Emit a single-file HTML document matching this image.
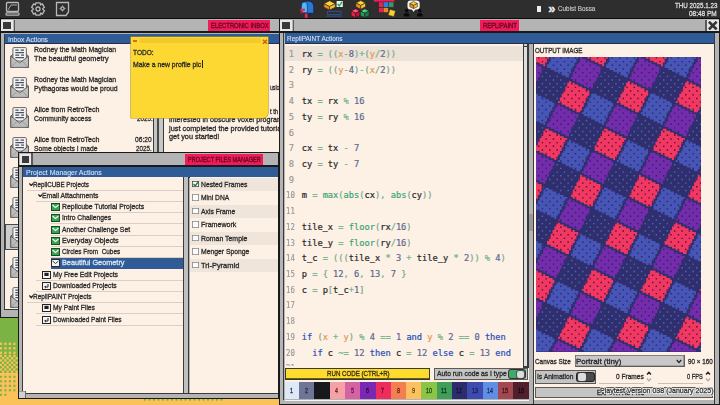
<!DOCTYPE html>
<html><head><meta charset="utf-8"><title>Desktop</title>
<style>
html,body{margin:0;padding:0;background:#2b2b2b;}
#s{position:relative;width:720px;height:405px;overflow:hidden;font-family:"Liberation Sans",sans-serif;}
#s div,#s span,#s svg{position:absolute;display:block;}
#s .t{white-space:pre;line-height:1.2;font-weight:400;-webkit-text-stroke:0.32px currentColor;transform-origin:0 50%;}
#s .m{-webkit-text-stroke:0.22px currentColor;white-space:pre;font-family:"DejaVu Sans Mono","Liberation Mono",monospace;font-size:8.7px;line-height:15.74px;color:#2a2a2a;transform-origin:0 50%;}
#s .m i{font-style:normal;position:static;display:inline;}
</style></head><body><div id="s">
<div style="left:0px;top:0px;width:720px;height:405px;background:#fcc25a;"></div>
<div style="left:0px;top:300px;width:30px;height:72.7px;background:#7bb344;"></div>
<svg style="left:0;top:336px" width="18.3" height="66" viewBox="0 0 18.3 66"><rect x="-0.25" y="6.65" width="2.3" height="2.3" fill="#fcc25a"/><rect x="4.25" y="6.65" width="2.3" height="2.3" fill="#fcc25a"/><rect x="8.75" y="6.65" width="2.3" height="2.3" fill="#fcc25a"/><rect x="13.25" y="6.65" width="2.3" height="2.3" fill="#fcc25a"/><rect x="-0.25" y="11.15" width="2.3" height="2.3" fill="#fcc25a"/><rect x="4.25" y="11.15" width="2.3" height="2.3" fill="#fcc25a"/><rect x="8.75" y="11.15" width="2.3" height="2.3" fill="#fcc25a"/><rect x="13.25" y="11.15" width="2.3" height="2.3" fill="#fcc25a"/><rect x="-0.25" y="15.65" width="2.3" height="2.3" fill="#fcc25a"/><rect x="4.25" y="15.65" width="2.3" height="2.3" fill="#fcc25a"/><rect x="8.75" y="15.65" width="2.3" height="2.3" fill="#fcc25a"/><rect x="13.25" y="15.65" width="2.3" height="2.3" fill="#fcc25a"/><rect x="-0.25" y="18.80" width="2.25" height="2.3" fill="#fcc25a"/><rect x="4.25" y="18.80" width="2.25" height="2.3" fill="#fcc25a"/><rect x="8.75" y="18.80" width="2.25" height="2.3" fill="#fcc25a"/><rect x="13.25" y="18.80" width="2.25" height="2.3" fill="#fcc25a"/><rect x="-2.50" y="21.05" width="2.25" height="2.3" fill="#fcc25a"/><rect x="2.00" y="21.05" width="2.25" height="2.3" fill="#fcc25a"/><rect x="6.50" y="21.05" width="2.25" height="2.3" fill="#fcc25a"/><rect x="11.00" y="21.05" width="2.25" height="2.3" fill="#fcc25a"/><rect x="15.50" y="21.05" width="2.25" height="2.3" fill="#fcc25a"/><rect x="-0.25" y="23.30" width="2.25" height="2.3" fill="#fcc25a"/><rect x="4.25" y="23.30" width="2.25" height="2.3" fill="#fcc25a"/><rect x="8.75" y="23.30" width="2.25" height="2.3" fill="#fcc25a"/><rect x="13.25" y="23.30" width="2.25" height="2.3" fill="#fcc25a"/><rect x="-2.50" y="25.55" width="2.25" height="2.3" fill="#fcc25a"/><rect x="2.00" y="25.55" width="2.25" height="2.3" fill="#fcc25a"/><rect x="6.50" y="25.55" width="2.25" height="2.3" fill="#fcc25a"/><rect x="11.00" y="25.55" width="2.25" height="2.3" fill="#fcc25a"/><rect x="15.50" y="25.55" width="2.25" height="2.3" fill="#fcc25a"/><rect x="-0.25" y="27.80" width="2.25" height="2.3" fill="#fcc25a"/><rect x="4.25" y="27.80" width="2.25" height="2.3" fill="#fcc25a"/><rect x="8.75" y="27.80" width="2.25" height="2.3" fill="#fcc25a"/><rect x="13.25" y="27.80" width="2.25" height="2.3" fill="#fcc25a"/><rect x="-2.50" y="30.05" width="2.25" height="2.3" fill="#fcc25a"/><rect x="2.00" y="30.05" width="2.25" height="2.3" fill="#fcc25a"/><rect x="6.50" y="30.05" width="2.25" height="2.3" fill="#fcc25a"/><rect x="11.00" y="30.05" width="2.25" height="2.3" fill="#fcc25a"/><rect x="15.50" y="30.05" width="2.25" height="2.3" fill="#fcc25a"/><rect x="-0.25" y="32.30" width="2.25" height="2.3" fill="#fcc25a"/><rect x="4.25" y="32.30" width="2.25" height="2.3" fill="#fcc25a"/><rect x="8.75" y="32.30" width="2.25" height="2.3" fill="#fcc25a"/><rect x="13.25" y="32.30" width="2.25" height="2.3" fill="#fcc25a"/><rect x="-2.50" y="34.55" width="2.25" height="2.3" fill="#fcc25a"/><rect x="2.00" y="34.55" width="2.25" height="2.3" fill="#fcc25a"/><rect x="6.50" y="34.55" width="2.25" height="2.3" fill="#fcc25a"/><rect x="11.00" y="34.55" width="2.25" height="2.3" fill="#fcc25a"/><rect x="15.50" y="34.55" width="2.25" height="2.3" fill="#fcc25a"/><rect x="-0.15" y="39.75" width="2.1" height="2.1" fill="#7bb344"/><rect x="4.35" y="39.75" width="2.1" height="2.1" fill="#7bb344"/><rect x="8.85" y="39.75" width="2.1" height="2.1" fill="#7bb344"/><rect x="13.35" y="39.75" width="2.1" height="2.1" fill="#7bb344"/><rect x="-0.15" y="44.25" width="2.1" height="2.1" fill="#7bb344"/><rect x="4.35" y="44.25" width="2.1" height="2.1" fill="#7bb344"/><rect x="8.85" y="44.25" width="2.1" height="2.1" fill="#7bb344"/><rect x="13.35" y="44.25" width="2.1" height="2.1" fill="#7bb344"/><rect x="-0.15" y="48.75" width="2.1" height="2.1" fill="#7bb344"/><rect x="4.35" y="48.75" width="2.1" height="2.1" fill="#7bb344"/><rect x="8.85" y="48.75" width="2.1" height="2.1" fill="#7bb344"/><rect x="13.35" y="48.75" width="2.1" height="2.1" fill="#7bb344"/><rect x="-0.15" y="53.25" width="2.1" height="2.1" fill="#7bb344"/><rect x="4.35" y="53.25" width="2.1" height="2.1" fill="#7bb344"/><rect x="8.85" y="53.25" width="2.1" height="2.1" fill="#7bb344"/><rect x="13.35" y="53.25" width="2.1" height="2.1" fill="#7bb344"/><rect x="-0.15" y="57.75" width="2.1" height="2.1" fill="#7bb344"/><rect x="4.35" y="57.75" width="2.1" height="2.1" fill="#7bb344"/></svg>
<svg style="left:144px;top:398.7px" width="80" height="2" viewBox="0 0 80 2"><rect x="0.00" y="0" width="2" height="1.6" fill="#7bb344"/><rect x="4.50" y="0" width="2" height="1.6" fill="#7bb344"/><rect x="9.00" y="0" width="2" height="1.6" fill="#7bb344"/><rect x="13.50" y="0" width="2" height="1.6" fill="#7bb344"/><rect x="18.00" y="0" width="2" height="1.6" fill="#7bb344"/><rect x="22.50" y="0" width="2" height="1.6" fill="#7bb344"/><rect x="27.00" y="0" width="2" height="1.6" fill="#7bb344"/><rect x="31.50" y="0" width="2" height="1.6" fill="#7bb344"/><rect x="36.00" y="0" width="2" height="1.6" fill="#7bb344"/><rect x="40.50" y="0" width="2" height="1.6" fill="#7bb344"/><rect x="45.00" y="0" width="2" height="1.6" fill="#7bb344"/><rect x="49.50" y="0" width="2" height="1.6" fill="#7bb344"/><rect x="54.00" y="0" width="2" height="1.6" fill="#7bb344"/><rect x="58.50" y="0" width="2" height="1.6" fill="#7bb344"/><rect x="63.00" y="0" width="2" height="1.6" fill="#7bb344"/><rect x="67.50" y="0" width="2" height="1.6" fill="#7bb344"/><rect x="72.00" y="0" width="2" height="1.6" fill="#7bb344"/><rect x="76.50" y="0" width="2" height="1.6" fill="#7bb344"/></svg>
<div style="left:0px;top:0px;width:720px;height:18px;background:#2e2e2e;"></div>
<div style="left:0px;top:18px;width:720px;height:1.5px;background:#0c0c0c;"></div>
<div style="left:0px;top:19px;width:280px;height:299px;background:#1a1a1a;"></div>
<div style="left:0.8px;top:19px;width:279px;height:297.5px;background:#b4b4b4;"></div>
<div style="left:0px;top:31.3px;width:280px;height:2.2px;background:#1a1a1a;"></div>
<div style="left:1px;top:19.8px;width:12.3px;height:11.3px;background:#e8e8e8;"></div>
<div style="left:3px;top:21.8px;width:8px;height:7.5px;background:#3a3a3a;"></div>
<div style="left:13.6px;top:19.5px;width:1.3px;height:11.8px;background:#5a5a5a;"></div>
<div style="left:207.5px;top:19.8px;width:62.5px;height:11.5px;background:#f21a5a;"></div>
<span class="t" style="left:210.5px;top:20.85px;font-size:7.79px;color:#5c0a20;transform:scaleX(0.7527);">ELECTRONIC INBOX</span>
<div style="left:4px;top:33.5px;width:1.4px;height:276px;background:#3a3a3a;"></div>
<div style="left:5.4px;top:33.5px;width:274px;height:9.8px;background:#2f5b96;"></div>
<div style="left:5.4px;top:43.2px;width:274px;height:0.8px;background:#20304a;"></div>
<span class="t" style="left:8.2px;top:34.55px;font-size:7.89px;color:#cfe0f5;-webkit-text-stroke:0.12px currentColor;transform:scaleX(0.8535);">Inbox Actions</span>
<div style="left:5.4px;top:44px;width:147.3px;height:264.5px;background:#fdf1e6;"></div>
<div style="left:5.4px;top:224.4px;width:147.3px;height:26px;background:#cdcdcd;box-shadow:inset 0 0 0 1px #4a4a4a;"></div>
<div style="left:4px;top:308.5px;width:276px;height:1.1px;background:#3a3a3a;"></div>
<div style="left:152.6px;top:44px;width:11.3px;height:264.5px;background:#c6c6c6;"></div>
<div style="left:152.6px;top:44px;width:1.2px;height:264.5px;background:#3a3a3a;"></div>
<div style="left:157.2px;top:44px;width:1.8px;height:264.5px;background:#4a4a4a;"></div>
<div style="left:162.6px;top:44px;width:1.3px;height:264.5px;background:#3a3a3a;"></div>
<div style="left:163.9px;top:44px;width:115.5px;height:264.5px;background:#fdf1e6;"></div>
<svg style="left:9.6px;top:46.8px" width="19.300" height="21.200" viewBox="0 0 20 22"><path d="M0.8 9.5 L3.5 7 V21.2 H0.8 Z M19.200 9.500 L16.500 7 V21.200 H19.200Z" fill="#a8a8a8" stroke="#555" stroke-width="0.9"/><rect x="3" y="0.6" width="14" height="14" rx="1" fill="#f4f4f4" stroke="#555" stroke-width="0.9"/><path d="M5.5 3.2h3.500M11 3.200h3.500M5.500 5.800h9M5.500 8.400h4M11.500 8.400h3M5.500 11h9" stroke="#4a5060" stroke-width="1.2"/><path d="M0.8 9.5 L10 16.5 L19.200 9.500 V21.200 H0.800 Z" fill="#bcbcbc" stroke="#555" stroke-width="0.9"/><path d="M0.8 21.2 L7.500 14.600 M19.200 21.200 L12.500 14.600" stroke="#8a8a8a" stroke-width="0.7"/></svg>
<span class="t" style="left:33.6px;top:45.36px;font-size:8.07px;color:#2a2a2a;transform:scaleX(0.8563);">Rodney the Math Magician</span>
<span class="t" style="left:33.6px;top:53.56px;font-size:8.07px;color:#2a2a2a;transform:scaleX(0.9042);">The beautiful geometry</span>
<svg style="left:9.6px;top:76.8px" width="19.300" height="21.200" viewBox="0 0 20 22"><path d="M0.8 9.5 L3.5 7 V21.2 H0.8 Z M19.200 9.500 L16.500 7 V21.200 H19.200Z" fill="#a8a8a8" stroke="#555" stroke-width="0.9"/><rect x="3" y="0.6" width="14" height="14" rx="1" fill="#f4f4f4" stroke="#555" stroke-width="0.9"/><path d="M5.5 3.2h3.500M11 3.200h3.500M5.500 5.800h9M5.500 8.400h4M11.500 8.400h3M5.500 11h9" stroke="#4a5060" stroke-width="1.2"/><path d="M0.8 9.5 L10 16.5 L19.200 9.500 V21.200 H0.800 Z" fill="#bcbcbc" stroke="#555" stroke-width="0.9"/><path d="M0.8 21.2 L7.500 14.600 M19.200 21.200 L12.500 14.600" stroke="#8a8a8a" stroke-width="0.7"/></svg>
<span class="t" style="left:33.6px;top:75.36px;font-size:8.07px;color:#2a2a2a;transform:scaleX(0.8563);">Rodney the Math Magician</span>
<span class="t" style="left:33.6px;top:83.56px;font-size:8.07px;color:#2a2a2a;transform:scaleX(0.8520);">Pythagoras would be proud</span>
<svg style="left:9.6px;top:106.8px" width="19.300" height="21.200" viewBox="0 0 20 22"><path d="M0.8 9.5 L3.5 7 V21.2 H0.8 Z M19.200 9.500 L16.500 7 V21.200 H19.200Z" fill="#a8a8a8" stroke="#555" stroke-width="0.9"/><rect x="3" y="0.6" width="14" height="14" rx="1" fill="#f4f4f4" stroke="#555" stroke-width="0.9"/><path d="M5.5 3.2h3.500M11 3.200h3.500M5.500 5.800h9M5.500 8.400h4M11.500 8.400h3M5.500 11h9" stroke="#4a5060" stroke-width="1.2"/><path d="M0.8 9.5 L10 16.5 L19.200 9.500 V21.200 H0.800 Z" fill="#bcbcbc" stroke="#555" stroke-width="0.9"/><path d="M0.8 21.2 L7.500 14.600 M19.200 21.200 L12.500 14.600" stroke="#8a8a8a" stroke-width="0.7"/></svg>
<span class="t" style="left:33.6px;top:105.36px;font-size:8.07px;color:#2a2a2a;transform:scaleX(0.8753);">Alice from RetroTech</span>
<span class="t" style="left:33.6px;top:113.56px;font-size:8.07px;color:#2a2a2a;transform:scaleX(0.8434);">Community access</span>
<svg style="left:9.6px;top:136.8px" width="19.300" height="21.200" viewBox="0 0 20 22"><path d="M0.8 9.5 L3.5 7 V21.2 H0.8 Z M19.200 9.500 L16.500 7 V21.200 H19.200Z" fill="#a8a8a8" stroke="#555" stroke-width="0.9"/><rect x="3" y="0.6" width="14" height="14" rx="1" fill="#f4f4f4" stroke="#555" stroke-width="0.9"/><path d="M5.5 3.2h3.500M11 3.200h3.500M5.500 5.800h9M5.500 8.400h4M11.500 8.400h3M5.500 11h9" stroke="#4a5060" stroke-width="1.2"/><path d="M0.8 9.5 L10 16.5 L19.200 9.500 V21.200 H0.800 Z" fill="#bcbcbc" stroke="#555" stroke-width="0.9"/><path d="M0.8 21.2 L7.500 14.600 M19.200 21.200 L12.500 14.600" stroke="#8a8a8a" stroke-width="0.7"/></svg>
<span class="t" style="left:33.6px;top:135.36px;font-size:8.07px;color:#2a2a2a;transform:scaleX(0.8753);">Alice from RetroTech</span>
<span class="t" style="left:33.6px;top:143.56px;font-size:8.07px;color:#2a2a2a;transform:scaleX(0.8382);">Some objects I made</span>
<svg style="left:9.6px;top:166.8px" width="19.300" height="21.200" viewBox="0 0 20 22"><path d="M0.8 9.5 L3.5 7 V21.2 H0.8 Z M19.200 9.500 L16.500 7 V21.200 H19.200Z" fill="#a8a8a8" stroke="#555" stroke-width="0.9"/><rect x="3" y="0.6" width="14" height="14" rx="1" fill="#f4f4f4" stroke="#555" stroke-width="0.9"/><path d="M5.5 3.2h3.500M11 3.200h3.500M5.500 5.800h9M5.500 8.400h4M11.500 8.400h3M5.500 11h9" stroke="#4a5060" stroke-width="1.2"/><path d="M0.8 9.5 L10 16.5 L19.200 9.500 V21.200 H0.800 Z" fill="#bcbcbc" stroke="#555" stroke-width="0.9"/><path d="M0.8 21.2 L7.500 14.600 M19.200 21.200 L12.500 14.600" stroke="#8a8a8a" stroke-width="0.7"/></svg>
<svg style="left:9.6px;top:196.8px" width="19.300" height="21.200" viewBox="0 0 20 22"><path d="M0.8 9.5 L3.5 7 V21.2 H0.8 Z M19.200 9.500 L16.500 7 V21.200 H19.200Z" fill="#a8a8a8" stroke="#555" stroke-width="0.9"/><rect x="3" y="0.6" width="14" height="14" rx="1" fill="#f4f4f4" stroke="#555" stroke-width="0.9"/><path d="M5.5 3.2h3.500M11 3.200h3.500M5.500 5.800h9M5.500 8.400h4M11.500 8.400h3M5.500 11h9" stroke="#4a5060" stroke-width="1.2"/><path d="M0.8 9.5 L10 16.5 L19.200 9.500 V21.200 H0.800 Z" fill="#bcbcbc" stroke="#555" stroke-width="0.9"/><path d="M0.8 21.2 L7.500 14.600 M19.200 21.200 L12.500 14.600" stroke="#8a8a8a" stroke-width="0.7"/></svg>
<svg style="left:9.6px;top:226.8px" width="19.300" height="21.200" viewBox="0 0 20 22"><path d="M0.8 9.5 L3.5 7 V21.2 H0.8 Z M19.200 9.500 L16.500 7 V21.200 H19.200Z" fill="#a8a8a8" stroke="#555" stroke-width="0.9"/><rect x="3" y="0.6" width="14" height="14" rx="1" fill="#f4f4f4" stroke="#555" stroke-width="0.9"/><path d="M5.5 3.2h3.500M11 3.200h3.500M5.500 5.800h9M5.500 8.400h4M11.500 8.400h3M5.500 11h9" stroke="#4a5060" stroke-width="1.2"/><path d="M0.8 9.5 L10 16.5 L19.200 9.500 V21.200 H0.800 Z" fill="#bcbcbc" stroke="#555" stroke-width="0.9"/><path d="M0.8 21.2 L7.500 14.600 M19.200 21.200 L12.500 14.600" stroke="#8a8a8a" stroke-width="0.7"/></svg>
<svg style="left:9.6px;top:256.8px" width="19.300" height="21.200" viewBox="0 0 20 22"><path d="M0.8 9.5 L3.5 7 V21.2 H0.8 Z M19.200 9.500 L16.500 7 V21.200 H19.200Z" fill="#a8a8a8" stroke="#555" stroke-width="0.9"/><rect x="3" y="0.6" width="14" height="14" rx="1" fill="#f4f4f4" stroke="#555" stroke-width="0.9"/><path d="M5.5 3.2h3.500M11 3.200h3.500M5.500 5.800h9M5.500 8.400h4M11.500 8.400h3M5.500 11h9" stroke="#4a5060" stroke-width="1.2"/><path d="M0.8 9.5 L10 16.5 L19.200 9.500 V21.200 H0.800 Z" fill="#bcbcbc" stroke="#555" stroke-width="0.9"/><path d="M0.8 21.2 L7.500 14.600 M19.200 21.200 L12.500 14.600" stroke="#8a8a8a" stroke-width="0.7"/></svg>
<svg style="left:9.6px;top:286.8px" width="19.300" height="21.200" viewBox="0 0 20 22"><path d="M0.8 9.5 L3.5 7 V21.2 H0.8 Z M19.200 9.500 L16.500 7 V21.200 H19.200Z" fill="#a8a8a8" stroke="#555" stroke-width="0.9"/><rect x="3" y="0.6" width="14" height="14" rx="1" fill="#f4f4f4" stroke="#555" stroke-width="0.9"/><path d="M5.5 3.2h3.500M11 3.200h3.500M5.500 5.800h9M5.500 8.400h4M11.500 8.400h3M5.500 11h9" stroke="#4a5060" stroke-width="1.2"/><path d="M0.8 9.5 L10 16.5 L19.200 9.500 V21.200 H0.800 Z" fill="#bcbcbc" stroke="#555" stroke-width="0.9"/><path d="M0.8 21.2 L7.500 14.600 M19.200 21.200 L12.500 14.600" stroke="#8a8a8a" stroke-width="0.7"/></svg>
<span class="t" style="left:135px;top:135.46px;font-size:8.07px;color:#2a2a2a;transform:scaleX(0.8240);">06:20</span>
<span class="t" style="left:136px;top:143.86px;font-size:8.07px;color:#2a2a2a;transform:scaleX(0.7741);">2025.</span>
<span class="t" style="left:137px;top:113.86px;font-size:8.07px;color:#2a2a2a;transform:scaleX(0.7741);">2025.</span>
<span class="t" style="left:269.5px;top:82.76px;font-size:8.07px;color:#2a2a2a;transform:scaleX(0.6325);">usic</span>
<span class="t" style="left:269.5px;top:107.26px;font-size:8.07px;color:#2a2a2a;transform:scaleX(0.7194);">t th</span>
<span class="t" style="left:169px;top:114.86px;font-size:8.07px;color:#2a2a2a;transform:scaleX(0.8884);">interested in obscure voxel program</span>
<span class="t" style="left:169px;top:123.56px;font-size:8.07px;color:#2a2a2a;transform:scaleX(0.9106);">just completed the provided tutorial</span>
<span class="t" style="left:169px;top:132.26px;font-size:8.07px;color:#2a2a2a;transform:scaleX(0.9065);">get you started!</span>
<div style="left:130.700px;top:37.100px;width:137.700px;height:80.700px;background:#fdd832;border-radius:0 0 5px 0;box-shadow:0 0 0 0.6px #b8951a;"></div>
<svg style="left:130.700px;top:37.100px" width="137.700" height="6.700" viewBox="0 0 137.700 6.700"><defs><pattern id="nd" width="2.250" height="2.250" patternUnits="userSpaceOnUse"><rect x="0" y="0" width="1.125" height="1.125" fill="#e9b920"/><rect x="1.125" y="1.125" width="1.125" height="1.125" fill="#e9b920"/></pattern></defs><rect x="8.500" y="1" width="121" height="5" fill="url(#nd)"/></svg>
<div style="left:132.7px;top:40px;width:4.6px;height:2.2px;background:#d26a1e;"></div>
<svg style="left:261.600px;top:38.800px" width="6" height="5.600" viewBox="0 0 6 6"><path d="M0.8 0.800 L5.200 5.200 M5.200 0.800 L0.800 5.200" stroke="#c8641a" stroke-width="1.600"/></svg>
<span class="t" style="left:133.3px;top:48.06px;font-size:8.07px;color:#2a2a2a;transform:scaleX(0.8137);">TODO:</span>
<span class="t" style="left:133.3px;top:59.56px;font-size:8.07px;color:#2a2a2a;transform:scaleX(0.8504);">Make a new profile pic</span>
<div style="left:201.6px;top:60.3px;width:0.8px;height:8.2px;background:#222;"></div>
<div style="left:18.3px;top:152px;width:261px;height:246.7px;background:#1a1a1a;"></div>
<div style="left:19.2px;top:153px;width:259px;height:244.6px;background:#b4b4b4;"></div>
<div style="left:18.3px;top:164.7px;width:261px;height:2.1px;background:#1a1a1a;"></div>
<div style="left:19.7px;top:153.5px;width:11px;height:11px;background:#e8e8e8;"></div>
<div style="left:21.5px;top:155.5px;width:7.6px;height:7px;background:#3a3a3a;"></div>
<div style="left:31.3px;top:153px;width:1.3px;height:11.8px;background:#5a5a5a;"></div>
<div style="left:184.5px;top:153.7px;width:78px;height:11.2px;background:#f21a5a;"></div>
<span class="t" style="left:187.5px;top:154.75px;font-size:7.79px;color:#5c0a20;transform:scaleX(0.7171);">PROJECT FILES MANAGER</span>
<div style="left:22.4px;top:166.8px;width:1px;height:226px;background:#3a3a3a;"></div>
<div style="left:23.4px;top:166.8px;width:254.6px;height:9.8px;background:#2f5b96;"></div>
<div style="left:23.4px;top:176.5px;width:254.6px;height:0.8px;background:#20304a;"></div>
<span class="t" style="left:25.8px;top:167.85px;font-size:7.89px;color:#cfe0f5;-webkit-text-stroke:0.12px currentColor;transform:scaleX(0.8872);">Project Manager Actions</span>
<div style="left:23.4px;top:177.3px;width:160px;height:215.4px;background:#fdf1e6;"></div>
<div style="left:183.3px;top:177.3px;width:6.2px;height:215.4px;background:#c0c0c0;"></div>
<div style="left:183.3px;top:177.3px;width:1.1px;height:215.4px;background:#3a3a3a;"></div>
<div style="left:188.4px;top:177.3px;width:1.1px;height:215.4px;background:#3a3a3a;"></div>
<div style="left:189.5px;top:177.3px;width:88.5px;height:215.4px;background:#fdf1e6;"></div>
<div style="left:23.4px;top:392.7px;width:255px;height:1.1px;background:#3a3a3a;"></div>
<div style="left:19.2px;top:390.5px;width:6.8px;height:7px;background:#d0d0d0;box-shadow:inset -0.8px 0 0 #555, inset 0 0.8px 0 #888;"></div>
<div style="left:27px;top:189.55px;width:156.3px;height:0.8px;background:#dbcfc5;"></div>
<svg style="left:28.6px;top:182.60000000000002px" width="4.500" height="3.600" viewBox="0 0 5 4"><path d="M0.5 0.500 L2.500 3 L4.500 0.500" fill="none" stroke="#222" stroke-width="1.400"/></svg>
<span class="t" style="left:33.0px;top:179.56px;font-size:8.07px;color:#2a2a2a;transform:scaleX(0.7753);">RepliCUBE Projects</span>
<div style="left:36px;top:200.8px;width:147.3px;height:0.8px;background:#dbcfc5;"></div>
<svg style="left:37.8px;top:193.85000000000002px" width="4.500" height="3.600" viewBox="0 0 5 4"><path d="M0.5 0.500 L2.500 3 L4.500 0.500" fill="none" stroke="#222" stroke-width="1.400"/></svg>
<span class="t" style="left:42.199999999999996px;top:190.81px;font-size:8.07px;color:#2a2a2a;transform:scaleX(0.8452);">Email Attachments</span>
<div style="left:51px;top:212.05px;width:132.3px;height:0.8px;background:#dbcfc5;"></div>
<svg style="left:51.2px;top:203.0px" width="9" height="8" viewBox="0 0 9 8"><rect x="0.5" y="0.500" width="8" height="7" fill="#35a552" stroke="#1c4a28" stroke-width="1"/><path d="M1.5 2 L4.500 4.500 L7.500 2" fill="none" stroke="#e8ffe8" stroke-width="1.100"/></svg>
<span class="t" style="left:61.75px;top:202.06px;font-size:8.07px;color:#2a2a2a;transform:scaleX(0.8563);">Replicube Tutorial Projects</span>
<div style="left:51px;top:223.3px;width:132.3px;height:0.8px;background:#dbcfc5;"></div>
<svg style="left:51.2px;top:214.25px" width="9" height="8" viewBox="0 0 9 8"><rect x="0.5" y="0.500" width="8" height="7" fill="#35a552" stroke="#1c4a28" stroke-width="1"/><path d="M1.5 2 L4.500 4.500 L7.500 2" fill="none" stroke="#e8ffe8" stroke-width="1.100"/></svg>
<span class="t" style="left:61.75px;top:213.31px;font-size:8.07px;color:#2a2a2a;transform:scaleX(0.8358);">Intro Challenges</span>
<div style="left:51px;top:234.55px;width:132.3px;height:0.8px;background:#dbcfc5;"></div>
<svg style="left:51.2px;top:225.5px" width="9" height="8" viewBox="0 0 9 8"><rect x="0.5" y="0.500" width="8" height="7" fill="#35a552" stroke="#1c4a28" stroke-width="1"/><path d="M1.5 2 L4.500 4.500 L7.500 2" fill="none" stroke="#e8ffe8" stroke-width="1.100"/></svg>
<span class="t" style="left:61.75px;top:224.56px;font-size:8.07px;color:#2a2a2a;transform:scaleX(0.8384);">Another Challenge Set</span>
<div style="left:51px;top:245.8px;width:132.3px;height:0.8px;background:#dbcfc5;"></div>
<svg style="left:51.2px;top:236.75px" width="9" height="8" viewBox="0 0 9 8"><rect x="0.5" y="0.500" width="8" height="7" fill="#35a552" stroke="#1c4a28" stroke-width="1"/><path d="M1.5 2 L4.500 4.500 L7.500 2" fill="none" stroke="#e8ffe8" stroke-width="1.100"/></svg>
<span class="t" style="left:61.75px;top:235.81px;font-size:8.07px;color:#2a2a2a;transform:scaleX(0.8964);">Everyday Objects</span>
<div style="left:51px;top:257.05px;width:132.3px;height:0.8px;background:#dbcfc5;"></div>
<svg style="left:51.2px;top:248.0px" width="9" height="8" viewBox="0 0 9 8"><rect x="0.5" y="0.500" width="8" height="7" fill="#35a552" stroke="#1c4a28" stroke-width="1"/><path d="M1.5 2 L4.500 4.500 L7.500 2" fill="none" stroke="#e8ffe8" stroke-width="1.100"/></svg>
<span class="t" style="left:61.75px;top:247.06px;font-size:8.07px;color:#2a2a2a;transform:scaleX(0.7914);">Circles From  Cubes</span>
<div style="left:51px;top:257.55px;width:132.3px;height:11.25px;background:#2f5b96;"></div>
<svg style="left:51.2px;top:259.25px" width="9" height="8" viewBox="0 0 9 8"><rect x="0.5" y="0.500" width="8" height="7" fill="#f6f6f6" stroke="#2a2a2a" stroke-width="1"/><path d="M1.5 2 L4.500 4.500 L7.500 2" fill="none" stroke="#3a3a3a" stroke-width="1"/></svg>
<span class="t" style="left:61.75px;top:258.31px;font-size:8.07px;color:#d6e4f7;transform:scaleX(0.9053);">Beautiful Geometry</span>
<div style="left:36px;top:279.55px;width:147.3px;height:0.8px;background:#dbcfc5;"></div>
<svg style="left:41.5px;top:270.5px" width="9" height="8" viewBox="0 0 9 8"><rect x="0.5" y="0.500" width="8" height="7" fill="#f4f4f4" stroke="#222" stroke-width="1"/><rect x="2.4" y="1.800" width="4.200" height="3.200" fill="#222"/></svg>
<span class="t" style="left:53px;top:269.56px;font-size:8.07px;color:#2a2a2a;transform:scaleX(0.8434);">My Free Edit Projects</span>
<div style="left:36px;top:290.8px;width:147.3px;height:0.8px;background:#dbcfc5;"></div>
<svg style="left:41.5px;top:281.75px" width="9" height="8" viewBox="0 0 9 8"><rect x="0.5" y="0.500" width="8" height="7" fill="#f4f4f4" stroke="#222" stroke-width="1"/><path d="M6 2 V5 H2.800 M4 3.800 L2.800 5 L4 6.200" fill="none" stroke="#222" stroke-width="1"/></svg>
<span class="t" style="left:53px;top:280.81px;font-size:8.07px;color:#2a2a2a;transform:scaleX(0.8359);">Downloaded Projects</span>
<div style="left:27px;top:302.05px;width:156.3px;height:0.8px;background:#dbcfc5;"></div>
<svg style="left:28.6px;top:295.1px" width="4.500" height="3.600" viewBox="0 0 5 4"><path d="M0.5 0.500 L2.500 3 L4.500 0.500" fill="none" stroke="#222" stroke-width="1.400"/></svg>
<span class="t" style="left:33.0px;top:292.06px;font-size:8.07px;color:#2a2a2a;transform:scaleX(0.8035);">RepliPAINT Projects</span>
<div style="left:36px;top:313.3px;width:147.3px;height:0.8px;background:#dbcfc5;"></div>
<svg style="left:41.5px;top:304.25px" width="9" height="8" viewBox="0 0 9 8"><rect x="0.5" y="0.500" width="8" height="7" fill="#f4f4f4" stroke="#222" stroke-width="1"/><rect x="2.4" y="1.800" width="4.200" height="3.200" fill="#222"/></svg>
<span class="t" style="left:53px;top:303.31px;font-size:8.07px;color:#2a2a2a;transform:scaleX(0.8280);">My Paint Files</span>
<div style="left:36px;top:324.55px;width:147.3px;height:0.8px;background:#dbcfc5;"></div>
<svg style="left:41.5px;top:315.5px" width="9" height="8" viewBox="0 0 9 8"><rect x="0.5" y="0.500" width="8" height="7" fill="#f4f4f4" stroke="#222" stroke-width="1"/><path d="M6 2 V5 H2.800 M4 3.800 L2.800 5 L4 6.200" fill="none" stroke="#222" stroke-width="1"/></svg>
<span class="t" style="left:53px;top:314.56px;font-size:8.07px;color:#2a2a2a;transform:scaleX(0.8089);">Downloaded Paint Files</span>
<div style="left:189.5px;top:177.6px;width:88.5px;height:13.5px;background:#f0e5db;"></div>
<div style="left:192px;top:180.79999999999998px;width:6.6px;height:6.6px;background:#fbfbfb;box-shadow:inset 0 0 0 0.8px #444;"></div>
<svg style="left:192px;top:179.79999999999998px" width="8" height="8" viewBox="0 0 8 8"><path d="M1.5 4 L3.200 6 L6.800 1.200" fill="none" stroke="#1d7a3a" stroke-width="1.400"/></svg>
<span class="t" style="left:201px;top:179.66px;font-size:8.07px;color:#2a2a2a;transform:scaleX(0.8411);">Nested Frames</span>
<div style="left:192px;top:194.29999999999998px;width:6.6px;height:6.6px;background:#fbfbfb;box-shadow:inset 0 0 0 0.8px #858585;"></div>
<span class="t" style="left:201px;top:193.16px;font-size:8.07px;color:#2a2a2a;transform:scaleX(0.8287);">Mini DNA</span>
<div style="left:189.5px;top:204.6px;width:88.5px;height:13.5px;background:#f0e5db;"></div>
<div style="left:192px;top:207.79999999999998px;width:6.6px;height:6.6px;background:#fbfbfb;box-shadow:inset 0 0 0 0.8px #858585;"></div>
<span class="t" style="left:201px;top:206.66px;font-size:8.07px;color:#2a2a2a;transform:scaleX(0.8405);">Axis Frame</span>
<div style="left:192px;top:221.29999999999998px;width:6.6px;height:6.6px;background:#fbfbfb;box-shadow:inset 0 0 0 0.8px #858585;"></div>
<span class="t" style="left:201px;top:220.16px;font-size:8.07px;color:#2a2a2a;transform:scaleX(0.8748);">Framework</span>
<div style="left:189.5px;top:231.6px;width:88.5px;height:13.5px;background:#f0e5db;"></div>
<div style="left:192px;top:234.79999999999998px;width:6.6px;height:6.6px;background:#fbfbfb;box-shadow:inset 0 0 0 0.8px #858585;"></div>
<span class="t" style="left:201px;top:233.66px;font-size:8.07px;color:#2a2a2a;transform:scaleX(0.8572);">Roman Temple</span>
<div style="left:192px;top:248.29999999999998px;width:6.6px;height:6.6px;background:#fbfbfb;box-shadow:inset 0 0 0 0.8px #858585;"></div>
<span class="t" style="left:201px;top:247.16px;font-size:8.07px;color:#2a2a2a;transform:scaleX(0.8430);">Menger Sponge</span>
<div style="left:189.5px;top:258.6px;width:88.5px;height:13.5px;background:#f0e5db;"></div>
<div style="left:192px;top:261.8px;width:6.6px;height:6.6px;background:#fbfbfb;box-shadow:inset 0 0 0 0.8px #858585;"></div>
<span class="t" style="left:201px;top:260.66px;font-size:8.07px;color:#2a2a2a;transform:scaleX(0.9259);">Tri-Pyramid</span>
<div style="left:279.4px;top:19px;width:1.1px;height:386px;background:#1a1a1a;"></div>
<div style="left:280.4px;top:19px;width:440px;height:384.6px;background:#b4b4b4;"></div>
<div style="left:283.3px;top:33.3px;width:1.2px;height:367px;background:#3a3a3a;"></div>
<div style="left:279.4px;top:31.3px;width:441px;height:2px;background:#1a1a1a;"></div>
<div style="left:279.4px;top:403.6px;width:441px;height:2px;background:#1a1a1a;"></div>
<div style="left:718.7px;top:19px;width:1.5px;height:386px;background:#1a1a1a;"></div>
<div style="left:280.2px;top:19.8px;width:12px;height:11.2px;background:#e8e8e8;"></div>
<div style="left:282.2px;top:21.8px;width:7.8px;height:7.2px;background:#3a3a3a;"></div>
<div style="left:292.6px;top:19.5px;width:1.3px;height:11.8px;background:#5a5a5a;"></div>
<div style="left:480px;top:19.8px;width:39px;height:11.5px;background:#f21a5a;"></div>
<span class="t" style="left:483px;top:20.85px;font-size:7.79px;color:#5c0a20;transform:scaleX(0.7552);">REPLIPAINT</span>
<div style="left:706.5px;top:19.5px;width:12.2px;height:11.8px;background:#e4e4e4;"></div>
<svg style="left:708.3px;top:21.3px" width="9.6" height="9.2" viewBox="0 0 10 10"><path d="M1.8 1.8 L8.2 8.2 M8.2 1.8 L1.8 8.2" stroke="#333" stroke-width="2.8" stroke-linecap="square"/></svg>
<div style="left:705.3px;top:19.5px;width:1.3px;height:11.8px;background:#5a5a5a;"></div>
<div style="left:284.5px;top:33.3px;width:429.3px;height:9.8px;background:#2f5b96;"></div>
<div style="left:284.5px;top:43px;width:429.3px;height:0.9px;background:#20304a;"></div>
<span class="t" style="left:287px;top:34.45px;font-size:7.89px;color:#cfe0f5;-webkit-text-stroke:0.12px currentColor;transform:scaleX(0.8167);">RepliPAINT Actions</span>
<div style="left:284.5px;top:43.9px;width:244px;height:337.8px;background:#fdf1e6;"></div>
<div style="left:284.5px;top:46px;width:238px;height:15.4px;background:#ece2d8;"></div>
<div style="left:523px;top:43.9px;width:5.8px;height:322.5px;background:#d0d0d0;"></div>
<div style="left:523px;top:43.9px;width:1.1px;height:322.5px;background:#3a3a3a;"></div>
<div style="left:527.4px;top:43.9px;width:1.4px;height:322.5px;background:#3a3a3a;"></div>
<div style="left:524.1px;top:47px;width:3.3px;height:319.4px;background:#dedede;"></div>
<div style="left:523px;top:45.8px;width:5.8px;height:1.2px;background:#3a3a3a;"></div>
<div style="left:523px;top:366.4px;width:5.8px;height:1.2px;background:#3a3a3a;"></div>
<div style="left:528.8px;top:43.9px;width:4.5px;height:359.7px;background:#b4b4b4;"></div>
<div style="left:533.2px;top:43.9px;width:0.9px;height:359.7px;background:#3a3a3a;"></div>
<div style="left:528.8px;top:213.6px;width:4.4px;height:17.4px;background:#989898;"></div>
<div style="left:534px;top:43.9px;width:180px;height:356px;background:#fdf1e6;"></div>
<div style="left:713.8px;top:33.3px;width:1.2px;height:370.3px;background:#3a3a3a;"></div>
<div style="left:715px;top:33.3px;width:3.7px;height:370.3px;background:#b4b4b4;"></div>
<div style="left:284.5px;top:399.5px;width:244.3px;height:1px;background:#f4f4f4;"></div>
<div style="left:284.5px;top:43.9px;width:238px;height:322.5px;overflow:hidden">
<span class="m" style="left:4.3px;top:3.1px;color:#9a9a9a;">1</span>
<span class="m" style="left:17.2px;top:3.1px"><i style="color:#2a2a2a">rx</i> <i style="color:#6fb38a">=</i> <i style="color:#7aa88a">(</i><i style="color:#7aa88a">(</i><i style="color:#e8964a">x</i><i style="color:#6fb38a">-</i><i style="color:#5c6a90">8</i><i style="color:#7aa88a">)</i><i style="color:#6fb38a">+</i><i style="color:#7aa88a">(</i><i style="color:#e8964a">y</i><i style="color:#6fb38a">/</i><i style="color:#5c6a90">2</i><i style="color:#7aa88a">)</i><i style="color:#7aa88a">)</i></span>
<span class="m" style="left:4.3px;top:18.815px;color:#9a9a9a;">2</span>
<span class="m" style="left:17.2px;top:18.815px"><i style="color:#2a2a2a">ry</i> <i style="color:#6fb38a">=</i> <i style="color:#7aa88a">(</i><i style="color:#7aa88a">(</i><i style="color:#e8964a">y</i><i style="color:#6fb38a">-</i><i style="color:#5c6a90">4</i><i style="color:#7aa88a">)</i><i style="color:#6fb38a">-</i><i style="color:#7aa88a">(</i><i style="color:#e8964a">x</i><i style="color:#6fb38a">/</i><i style="color:#5c6a90">2</i><i style="color:#7aa88a">)</i><i style="color:#7aa88a">)</i></span>
<span class="m" style="left:4.3px;top:34.53px;color:#9a9a9a;">3</span>
<span class="m" style="left:17.2px;top:34.53px"></span>
<span class="m" style="left:4.3px;top:50.245px;color:#9a9a9a;">4</span>
<span class="m" style="left:17.2px;top:50.245px"><i style="color:#2a2a2a">tx</i> <i style="color:#6fb38a">=</i> <i style="color:#2a2a2a">rx</i> <i style="color:#6fb38a">%</i> <i style="color:#5c6a90">16</i></span>
<span class="m" style="left:4.3px;top:65.96px;color:#9a9a9a;">5</span>
<span class="m" style="left:17.2px;top:65.96px"><i style="color:#2a2a2a">ty</i> <i style="color:#6fb38a">=</i> <i style="color:#2a2a2a">ry</i> <i style="color:#6fb38a">%</i> <i style="color:#5c6a90">16</i></span>
<span class="m" style="left:4.3px;top:81.675px;color:#9a9a9a;">6</span>
<span class="m" style="left:17.2px;top:81.675px"></span>
<span class="m" style="left:4.3px;top:97.38999999999999px;color:#9a9a9a;">7</span>
<span class="m" style="left:17.2px;top:97.38999999999999px"><i style="color:#2a2a2a">cx</i> <i style="color:#6fb38a">=</i> <i style="color:#2a2a2a">tx</i> <i style="color:#6fb38a">-</i> <i style="color:#5c6a90">7</i></span>
<span class="m" style="left:4.3px;top:113.10499999999999px;color:#9a9a9a;">8</span>
<span class="m" style="left:17.2px;top:113.10499999999999px"><i style="color:#2a2a2a">cy</i> <i style="color:#6fb38a">=</i> <i style="color:#2a2a2a">ty</i> <i style="color:#6fb38a">-</i> <i style="color:#5c6a90">7</i></span>
<span class="m" style="left:4.3px;top:128.82px;color:#9a9a9a;">9</span>
<span class="m" style="left:17.2px;top:128.82px"></span>
<span class="m" style="left:1.0px;top:144.535px;color:#9a9a9a;transform:scaleX(.84);">10</span>
<span class="m" style="left:17.2px;top:144.535px"><i style="color:#2a2a2a">m</i> <i style="color:#6fb38a">=</i> <i style="color:#3fa67a">max</i><i style="color:#7aa88a">(</i><i style="color:#3fa67a">abs</i><i style="color:#7aa88a">(</i><i style="color:#2a2a2a">cx</i><i style="color:#7aa88a">)</i><i style="color:#6fb38a">,</i> <i style="color:#3fa67a">abs</i><i style="color:#7aa88a">(</i><i style="color:#2a2a2a">cy</i><i style="color:#7aa88a">)</i><i style="color:#7aa88a">)</i></span>
<span class="m" style="left:1.0px;top:160.25px;color:#9a9a9a;transform:scaleX(.84);">11</span>
<span class="m" style="left:17.2px;top:160.25px"></span>
<span class="m" style="left:1.0px;top:175.965px;color:#9a9a9a;transform:scaleX(.84);">12</span>
<span class="m" style="left:17.2px;top:175.965px"><i style="color:#2a2a2a">tile_x</i> <i style="color:#6fb38a">=</i> <i style="color:#3fa67a">floor</i><i style="color:#7aa88a">(</i><i style="color:#2a2a2a">rx</i><i style="color:#6fb38a">/</i><i style="color:#5c6a90">16</i><i style="color:#7aa88a">)</i></span>
<span class="m" style="left:1.0px;top:191.67999999999998px;color:#9a9a9a;transform:scaleX(.84);">13</span>
<span class="m" style="left:17.2px;top:191.67999999999998px"><i style="color:#2a2a2a">tile_y</i> <i style="color:#6fb38a">=</i> <i style="color:#3fa67a">floor</i><i style="color:#7aa88a">(</i><i style="color:#2a2a2a">ry</i><i style="color:#6fb38a">/</i><i style="color:#5c6a90">16</i><i style="color:#7aa88a">)</i></span>
<span class="m" style="left:1.0px;top:207.39499999999998px;color:#9a9a9a;transform:scaleX(.84);">14</span>
<span class="m" style="left:17.2px;top:207.39499999999998px"><i style="color:#2a2a2a">t_c</i> <i style="color:#6fb38a">=</i> <i style="color:#7aa88a">(</i><i style="color:#7aa88a">(</i><i style="color:#7aa88a">(</i><i style="color:#2a2a2a">tile_x</i> <i style="color:#6fb38a">*</i> <i style="color:#5c6a90">3</i> <i style="color:#6fb38a">+</i> <i style="color:#2a2a2a">tile_y</i> <i style="color:#6fb38a">*</i> <i style="color:#5c6a90">2</i><i style="color:#7aa88a">)</i><i style="color:#7aa88a">)</i> <i style="color:#6fb38a">%</i> <i style="color:#5c6a90">4</i><i style="color:#7aa88a">)</i></span>
<span class="m" style="left:1.0px;top:223.10999999999999px;color:#9a9a9a;transform:scaleX(.84);">15</span>
<span class="m" style="left:17.2px;top:223.10999999999999px"><i style="color:#2a2a2a">p</i> <i style="color:#6fb38a">=</i> <i style="color:#7aa88a">{</i> <i style="color:#5c6a90">12</i><i style="color:#6fb38a">,</i> <i style="color:#5c6a90">6</i><i style="color:#6fb38a">,</i> <i style="color:#5c6a90">13</i><i style="color:#6fb38a">,</i> <i style="color:#5c6a90">7</i> <i style="color:#7aa88a">}</i></span>
<span class="m" style="left:1.0px;top:238.825px;color:#9a9a9a;transform:scaleX(.84);">16</span>
<span class="m" style="left:17.2px;top:238.825px"><i style="color:#2a2a2a">c</i> <i style="color:#6fb38a">=</i> <i style="color:#2a2a2a">p</i><i style="color:#7aa88a">[</i><i style="color:#2a2a2a">t_c</i><i style="color:#6fb38a">+</i><i style="color:#5c6a90">1</i><i style="color:#7aa88a">]</i></span>
<span class="m" style="left:1.0px;top:254.54px;color:#9a9a9a;transform:scaleX(.84);">17</span>
<span class="m" style="left:17.2px;top:254.54px"></span>
<span class="m" style="left:1.0px;top:270.255px;color:#9a9a9a;transform:scaleX(.84);">18</span>
<span class="m" style="left:17.2px;top:270.255px"></span>
<span class="m" style="left:1.0px;top:285.97px;color:#9a9a9a;transform:scaleX(.84);">19</span>
<span class="m" style="left:17.2px;top:285.97px"><i style="color:#2a50b8">if</i> <i style="color:#7aa88a">(</i><i style="color:#e8964a">x</i> <i style="color:#6fb38a">+</i> <i style="color:#e8964a">y</i><i style="color:#7aa88a">)</i> <i style="color:#6fb38a">%</i> <i style="color:#5c6a90">4</i> <i style="color:#6fb38a">=</i><i style="color:#6fb38a">=</i> <i style="color:#5c6a90">1</i> <i style="color:#2a50b8">and</i> <i style="color:#e8964a">y</i> <i style="color:#6fb38a">%</i> <i style="color:#5c6a90">2</i> <i style="color:#6fb38a">=</i><i style="color:#6fb38a">=</i> <i style="color:#5c6a90">0</i> <i style="color:#2a50b8">then</i></span>
<span class="m" style="left:1.0px;top:301.685px;color:#9a9a9a;transform:scaleX(.84);">20</span>
<span class="m" style="left:17.2px;top:301.685px">  <i style="color:#2a50b8">if</i> <i style="color:#2a2a2a">c</i> <i style="color:#6fb38a">~</i><i style="color:#6fb38a">=</i> <i style="color:#5c6a90">12</i> <i style="color:#2a50b8">then</i> <i style="color:#2a2a2a">c</i> <i style="color:#6fb38a">=</i> <i style="color:#5c6a90">12</i> <i style="color:#2a50b8">else</i> <i style="color:#2a2a2a">c</i> <i style="color:#6fb38a">=</i> <i style="color:#5c6a90">13</i> <i style="color:#2a50b8">end</i></span>
<span class="m" style="left:1.0px;top:317.40000000000003px;color:#9a9a9a;transform:scaleX(.84);">21</span>
<span class="m" style="left:17.2px;top:317.40000000000003px">    <i style="color:#2a2a2a">c</i> <i style="color:#6fb38a">=</i> <i style="color:#2a2a2a">c</i></span>
</div>
<div style="left:285.4px;top:368px;width:145px;height:11.8px;background:#fddc2e;box-shadow:inset 0 0 0 1px #3a3a2a, inset 0 -2px 0 0 #6a5c1a;"></div>
<span class="t" style="left:326.8px;top:369.15px;font-size:7.79px;color:#3a2a10;transform:scaleX(0.7898);">RUN CODE (CTRL+R)</span>
<div style="left:433.9px;top:368.3px;width:93.8px;height:11.7px;background:#c4c4c4;box-shadow:inset 0 0 0 1px #5a5a5a;"></div>
<span class="t" style="left:436.5px;top:369.45px;font-size:7.89px;color:#2a2a2a;transform:scaleX(0.8602);">Auto run code as I type</span>
<div style="left:509px;top:370.2px;width:16px;height:8px;background:#3faa6a;border-radius:2px;box-shadow:0 0 0 1px #333;"></div>
<div style="left:517.3px;top:370.7px;width:7.2px;height:7px;background:#dcdcdc;border-radius:2px;box-shadow:0 0 0 0.8px #444;"></div>
<div style="left:284.5px;top:381.6px;width:14.7px;height:17.9px;background:#dfe9f5;"></div>
<span class="t" style="left:289.95px;top:385.84px;font-size:7.6px;color:#2a2a4a;transform:scaleX(0.7098);">1</span>
<div style="left:299.0px;top:381.6px;width:15.50000000000001px;height:17.9px;background:#6e7597;"></div>
<span class="t" style="left:304.84999999999997px;top:385.84px;font-size:7.6px;color:#1e2448;transform:scaleX(0.7098);">2</span>
<div style="left:314.3px;top:381.6px;width:15.50000000000001px;height:17.9px;background:#17191c;"></div>
<div style="left:329.6px;top:381.6px;width:15.499999999999954px;height:17.9px;background:#f6a1a6;"></div>
<span class="t" style="left:335.45px;top:385.84px;font-size:7.6px;color:#6a2a2a;transform:scaleX(0.7098);">4</span>
<div style="left:344.9px;top:381.6px;width:15.50000000000001px;height:17.9px;background:#d662a3;"></div>
<span class="t" style="left:350.74999999999994px;top:385.84px;font-size:7.6px;color:#5a1a4a;transform:scaleX(0.7098);">5</span>
<div style="left:360.2px;top:381.6px;width:15.50000000000001px;height:17.9px;background:#7a28b4;"></div>
<span class="t" style="left:366.05px;top:385.84px;font-size:7.6px;color:#2a0a4a;transform:scaleX(0.7098);">6</span>
<div style="left:375.5px;top:381.6px;width:15.50000000000001px;height:17.9px;background:#ee2c5e;"></div>
<span class="t" style="left:381.34999999999997px;top:385.84px;font-size:7.6px;color:#5a0a2a;transform:scaleX(0.7098);">7</span>
<div style="left:390.8px;top:381.6px;width:15.50000000000001px;height:17.9px;background:#f47e50;"></div>
<span class="t" style="left:396.65000000000003px;top:385.84px;font-size:7.6px;color:#6a2a10;transform:scaleX(0.7098);">8</span>
<div style="left:406.1px;top:381.6px;width:15.499999999999954px;height:17.9px;background:#fdc060;"></div>
<span class="t" style="left:411.95px;top:385.84px;font-size:7.6px;color:#6a4a10;transform:scaleX(0.7098);">9</span>
<div style="left:421.4px;top:381.6px;width:15.500000000000068px;height:17.9px;background:#8cc543;"></div>
<span class="t" style="left:425.75px;top:385.84px;font-size:7.6px;color:#1a4a1a;transform:scaleX(0.7098);">10</span>
<div style="left:436.70000000000005px;top:381.6px;width:15.499999999999954px;height:17.9px;background:#3f9f58;"></div>
<span class="t" style="left:441.05px;top:385.84px;font-size:7.6px;color:#0a3a1a;transform:scaleX(0.7605);">11</span>
<div style="left:452.0px;top:381.6px;width:15.50000000000001px;height:17.9px;background:#2e2c6a;"></div>
<span class="t" style="left:456.34999999999997px;top:385.84px;font-size:7.6px;color:#14143a;transform:scaleX(0.7098);">12</span>
<div style="left:467.3px;top:381.6px;width:15.50000000000001px;height:17.9px;background:#3d4aae;"></div>
<span class="t" style="left:471.65000000000003px;top:385.84px;font-size:7.6px;color:#1a205a;transform:scaleX(0.7098);">13</span>
<div style="left:482.6px;top:381.6px;width:15.499999999999954px;height:17.9px;background:#5f8fe4;"></div>
<span class="t" style="left:486.95px;top:385.84px;font-size:7.6px;color:#1a2a6a;transform:scaleX(0.7098);">14</span>
<div style="left:497.9px;top:381.6px;width:15.500000000000068px;height:17.9px;background:#a4474f;"></div>
<span class="t" style="left:502.25px;top:385.84px;font-size:7.6px;color:#3a1218;transform:scaleX(0.7098);">15</span>
<div style="left:513.2px;top:381.6px;width:15.499999999999954px;height:17.9px;background:#4f1f2e;"></div>
<span class="t" style="left:517.5500000000001px;top:385.84px;font-size:7.6px;color:#1a080e;transform:scaleX(0.7098);">16</span>
<span class="t" style="left:535.3px;top:45.55px;font-size:7.89px;color:#2a2a2a;transform:scaleX(0.7935);">OUTPUT IMAGE</span>
<div style="left:535.6px;top:57.1px;width:165.4px;height:294.6px;overflow:hidden;background:#4a3a90"><svg style="left:0;top:0;filter:blur(0.55px)" width="165.4" height="294.6" viewBox="0 0 90 160" preserveAspectRatio="none"><rect x="-2" y="-2" width="94" height="164" fill="#2f2f6e"/><path fill="#742cac" d="M24 0h1v1h-1zM56 0h1v1h-1zM88 0h1v1h-1zM24 1h3v1h-3zM56 1h3v1h-3zM88 1h2v1h-2zM23 2h6v1h-6zM55 2h6v1h-6zM87 2h3v1h-3zM23 3h8v1h-8zM55 3h8v1h-8zM87 3h3v1h-3zM0 4h1v1h-1zM22 4h11v1h-11zM54 4h11v1h-11zM86 4h4v1h-4zM0 5h3v1h-3zM22 5h13v1h-13zM54 5h13v1h-13zM86 5h4v1h-4zM0 6h4v1h-4zM21 6h15v1h-15zM53 6h15v1h-15zM85 6h5v1h-5zM0 7h3v1h-3zM21 7h14v1h-14zM53 7h14v1h-14zM85 7h5v1h-5zM0 8h3v1h-3zM20 8h15v1h-15zM52 8h15v1h-15zM84 8h6v1h-6zM0 9h2v1h-2zM20 9h14v1h-14zM52 9h14v1h-14zM84 9h6v1h-6zM0 10h2v1h-2zM19 10h15v1h-15zM51 10h15v1h-15zM83 10h7v1h-7zM0 11h1v1h-1zM19 11h14v1h-14zM51 11h14v1h-14zM83 11h7v1h-7zM0 12h1v1h-1zM20 12h13v1h-13zM52 12h13v1h-13zM84 12h6v1h-6zM22 13h10v1h-10zM54 13h10v1h-10zM86 13h4v1h-4zM24 14h8v1h-8zM56 14h8v1h-8zM88 14h2v1h-2zM26 15h5v1h-5zM58 15h5v1h-5zM28 16h3v1h-3zM60 16h3v1h-3zM11 26h2v1h-2zM43 26h2v1h-2zM75 26h2v1h-2zM11 27h4v1h-4zM43 27h4v1h-4zM75 27h4v1h-4zM10 28h7v1h-7zM42 28h7v1h-7zM74 28h7v1h-7zM10 29h9v1h-9zM42 29h9v1h-9zM74 29h9v1h-9zM9 30h12v1h-12zM41 30h12v1h-12zM73 30h12v1h-12zM9 31h14v1h-14zM41 31h14v1h-14zM73 31h14v1h-14zM8 32h15v1h-15zM40 32h15v1h-15zM72 32h15v1h-15zM8 33h14v1h-14zM40 33h14v1h-14zM72 33h14v1h-14zM7 34h15v1h-15zM39 34h15v1h-15zM71 34h15v1h-15zM7 35h14v1h-14zM39 35h14v1h-14zM71 35h14v1h-14zM6 36h15v1h-15zM38 36h15v1h-15zM70 36h15v1h-15zM6 37h14v1h-14zM38 37h14v1h-14zM70 37h14v1h-14zM8 38h12v1h-12zM40 38h12v1h-12zM72 38h12v1h-12zM10 39h9v1h-9zM42 39h9v1h-9zM74 39h9v1h-9zM12 40h7v1h-7zM44 40h7v1h-7zM76 40h7v1h-7zM14 41h4v1h-4zM46 41h4v1h-4zM78 41h4v1h-4zM16 42h2v1h-2zM48 42h2v1h-2zM80 42h2v1h-2zM0 52h1v1h-1zM30 52h3v1h-3zM62 52h3v1h-3zM0 53h3v1h-3zM30 53h5v1h-5zM62 53h5v1h-5zM0 54h5v1h-5zM29 54h8v1h-8zM61 54h8v1h-8zM0 55h7v1h-7zM29 55h10v1h-10zM61 55h10v1h-10zM0 56h9v1h-9zM28 56h13v1h-13zM60 56h13v1h-13zM0 57h10v1h-10zM28 57h14v1h-14zM60 57h14v1h-14zM0 58h10v1h-10zM27 58h15v1h-15zM59 58h15v1h-15zM0 59h9v1h-9zM27 59h14v1h-14zM59 59h14v1h-14zM0 60h9v1h-9zM26 60h15v1h-15zM58 60h15v1h-15zM0 61h8v1h-8zM26 61h14v1h-14zM58 61h14v1h-14zM0 62h8v1h-8zM25 62h15v1h-15zM57 62h15v1h-15zM89 62h1v1h-1zM0 63h7v1h-7zM26 63h13v1h-13zM58 63h13v1h-13zM0 64h7v1h-7zM28 64h11v1h-11zM60 64h11v1h-11zM0 65h6v1h-6zM30 65h8v1h-8zM62 65h8v1h-8zM0 66h6v1h-6zM32 66h6v1h-6zM64 66h6v1h-6zM2 67h3v1h-3zM34 67h3v1h-3zM66 67h3v1h-3zM4 68h1v1h-1zM36 68h1v1h-1zM68 68h1v1h-1zM18 77h1v1h-1zM50 77h1v1h-1zM82 77h1v1h-1zM17 78h4v1h-4zM49 78h4v1h-4zM81 78h4v1h-4zM17 79h6v1h-6zM49 79h6v1h-6zM81 79h6v1h-6zM16 80h9v1h-9zM48 80h9v1h-9zM80 80h9v1h-9zM16 81h11v1h-11zM48 81h11v1h-11zM80 81h10v1h-10zM15 82h14v1h-14zM47 82h14v1h-14zM79 82h11v1h-11zM15 83h14v1h-14zM47 83h14v1h-14zM79 83h11v1h-11zM14 84h15v1h-15zM46 84h15v1h-15zM78 84h12v1h-12zM14 85h14v1h-14zM46 85h14v1h-14zM78 85h12v1h-12zM13 86h15v1h-15zM45 86h15v1h-15zM77 86h13v1h-13zM13 87h14v1h-14zM45 87h14v1h-14zM77 87h13v1h-13zM12 88h15v1h-15zM44 88h15v1h-15zM76 88h14v1h-14zM14 89h12v1h-12zM46 89h12v1h-12zM78 89h12v1h-12zM16 90h10v1h-10zM48 90h10v1h-10zM80 90h10v1h-10zM18 91h7v1h-7zM50 91h7v1h-7zM82 91h7v1h-7zM20 92h5v1h-5zM52 92h5v1h-5zM84 92h5v1h-5zM22 93h2v1h-2zM54 93h2v1h-2zM86 93h2v1h-2zM5 103h2v1h-2zM37 103h2v1h-2zM69 103h2v1h-2zM4 104h5v1h-5zM36 104h5v1h-5zM68 104h5v1h-5zM4 105h7v1h-7zM36 105h7v1h-7zM68 105h7v1h-7zM3 106h10v1h-10zM35 106h10v1h-10zM67 106h10v1h-10zM3 107h12v1h-12zM35 107h12v1h-12zM67 107h12v1h-12zM2 108h15v1h-15zM34 108h15v1h-15zM66 108h15v1h-15zM2 109h14v1h-14zM34 109h14v1h-14zM66 109h14v1h-14zM1 110h15v1h-15zM33 110h15v1h-15zM65 110h15v1h-15zM1 111h14v1h-14zM33 111h14v1h-14zM65 111h14v1h-14zM0 112h15v1h-15zM32 112h15v1h-15zM64 112h15v1h-15zM0 113h14v1h-14zM32 113h14v1h-14zM64 113h14v1h-14zM0 114h14v1h-14zM32 114h14v1h-14zM64 114h14v1h-14zM2 115h11v1h-11zM34 115h11v1h-11zM66 115h11v1h-11zM4 116h9v1h-9zM36 116h9v1h-9zM68 116h9v1h-9zM6 117h6v1h-6zM38 117h6v1h-6zM70 117h6v1h-6zM8 118h4v1h-4zM40 118h4v1h-4zM72 118h4v1h-4zM10 119h1v1h-1zM42 119h1v1h-1zM74 119h1v1h-1zM24 128h1v1h-1zM56 128h1v1h-1zM88 128h1v1h-1zM24 129h3v1h-3zM56 129h3v1h-3zM88 129h2v1h-2zM23 130h6v1h-6zM55 130h6v1h-6zM87 130h3v1h-3zM23 131h8v1h-8zM55 131h8v1h-8zM87 131h3v1h-3zM0 132h1v1h-1zM22 132h11v1h-11zM54 132h11v1h-11zM86 132h4v1h-4zM0 133h3v1h-3zM22 133h13v1h-13zM54 133h13v1h-13zM86 133h4v1h-4zM0 134h4v1h-4zM21 134h15v1h-15zM53 134h15v1h-15zM85 134h5v1h-5zM0 135h3v1h-3zM21 135h14v1h-14zM53 135h14v1h-14zM85 135h5v1h-5zM0 136h3v1h-3zM20 136h15v1h-15zM52 136h15v1h-15zM84 136h6v1h-6zM0 137h2v1h-2zM20 137h14v1h-14zM52 137h14v1h-14zM84 137h6v1h-6zM0 138h2v1h-2zM19 138h15v1h-15zM51 138h15v1h-15zM83 138h7v1h-7zM0 139h1v1h-1zM19 139h14v1h-14zM51 139h14v1h-14zM83 139h7v1h-7zM0 140h1v1h-1zM20 140h13v1h-13zM52 140h13v1h-13zM84 140h6v1h-6zM22 141h10v1h-10zM54 141h10v1h-10zM86 141h4v1h-4zM24 142h8v1h-8zM56 142h8v1h-8zM88 142h2v1h-2zM26 143h5v1h-5zM58 143h5v1h-5zM28 144h3v1h-3zM60 144h3v1h-3zM11 154h2v1h-2zM43 154h2v1h-2zM75 154h2v1h-2zM11 155h4v1h-4zM43 155h4v1h-4zM75 155h4v1h-4zM10 156h7v1h-7zM42 156h7v1h-7zM74 156h7v1h-7zM10 157h9v1h-9zM42 157h9v1h-9zM74 157h9v1h-9zM9 158h12v1h-12zM41 158h12v1h-12zM73 158h12v1h-12zM9 159h14v1h-14zM41 159h14v1h-14zM73 159h14v1h-14z"/><path fill="#4655b6" d="M8 0h15v1h-15zM40 0h15v1h-15zM72 0h15v1h-15zM8 1h14v1h-14zM40 1h14v1h-14zM72 1h14v1h-14zM7 2h15v1h-15zM39 2h15v1h-15zM71 2h15v1h-15zM7 3h14v1h-14zM39 3h14v1h-14zM71 3h14v1h-14zM6 4h15v1h-15zM38 4h15v1h-15zM70 4h15v1h-15zM6 5h14v1h-14zM38 5h14v1h-14zM70 5h14v1h-14zM8 6h12v1h-12zM40 6h12v1h-12zM72 6h12v1h-12zM10 7h9v1h-9zM42 7h9v1h-9zM74 7h9v1h-9zM12 8h7v1h-7zM44 8h7v1h-7zM76 8h7v1h-7zM14 9h4v1h-4zM46 9h4v1h-4zM78 9h4v1h-4zM16 10h2v1h-2zM48 10h2v1h-2zM80 10h2v1h-2zM0 20h1v1h-1zM30 20h3v1h-3zM62 20h3v1h-3zM0 21h3v1h-3zM30 21h5v1h-5zM62 21h5v1h-5zM0 22h5v1h-5zM29 22h8v1h-8zM61 22h8v1h-8zM0 23h7v1h-7zM29 23h10v1h-10zM61 23h10v1h-10zM0 24h9v1h-9zM28 24h13v1h-13zM60 24h13v1h-13zM0 25h10v1h-10zM28 25h14v1h-14zM60 25h14v1h-14zM0 26h10v1h-10zM27 26h15v1h-15zM59 26h15v1h-15zM0 27h9v1h-9zM27 27h14v1h-14zM59 27h14v1h-14zM0 28h9v1h-9zM26 28h15v1h-15zM58 28h15v1h-15zM0 29h8v1h-8zM26 29h14v1h-14zM58 29h14v1h-14zM0 30h8v1h-8zM25 30h15v1h-15zM57 30h15v1h-15zM89 30h1v1h-1zM0 31h7v1h-7zM26 31h13v1h-13zM58 31h13v1h-13zM0 32h7v1h-7zM28 32h11v1h-11zM60 32h11v1h-11zM0 33h6v1h-6zM30 33h8v1h-8zM62 33h8v1h-8zM0 34h6v1h-6zM32 34h6v1h-6zM64 34h6v1h-6zM2 35h3v1h-3zM34 35h3v1h-3zM66 35h3v1h-3zM4 36h1v1h-1zM36 36h1v1h-1zM68 36h1v1h-1zM18 45h1v1h-1zM50 45h1v1h-1zM82 45h1v1h-1zM17 46h4v1h-4zM49 46h4v1h-4zM81 46h4v1h-4zM17 47h6v1h-6zM49 47h6v1h-6zM81 47h6v1h-6zM16 48h9v1h-9zM48 48h9v1h-9zM80 48h9v1h-9zM16 49h11v1h-11zM48 49h11v1h-11zM80 49h10v1h-10zM15 50h14v1h-14zM47 50h14v1h-14zM79 50h11v1h-11zM15 51h14v1h-14zM47 51h14v1h-14zM79 51h11v1h-11zM14 52h15v1h-15zM46 52h15v1h-15zM78 52h12v1h-12zM14 53h14v1h-14zM46 53h14v1h-14zM78 53h12v1h-12zM13 54h15v1h-15zM45 54h15v1h-15zM77 54h13v1h-13zM13 55h14v1h-14zM45 55h14v1h-14zM77 55h13v1h-13zM12 56h15v1h-15zM44 56h15v1h-15zM76 56h14v1h-14zM14 57h12v1h-12zM46 57h12v1h-12zM78 57h12v1h-12zM16 58h10v1h-10zM48 58h10v1h-10zM80 58h10v1h-10zM18 59h7v1h-7zM50 59h7v1h-7zM82 59h7v1h-7zM20 60h5v1h-5zM52 60h5v1h-5zM84 60h5v1h-5zM22 61h2v1h-2zM54 61h2v1h-2zM86 61h2v1h-2zM5 71h2v1h-2zM37 71h2v1h-2zM69 71h2v1h-2zM4 72h5v1h-5zM36 72h5v1h-5zM68 72h5v1h-5zM4 73h7v1h-7zM36 73h7v1h-7zM68 73h7v1h-7zM3 74h10v1h-10zM35 74h10v1h-10zM67 74h10v1h-10zM3 75h12v1h-12zM35 75h12v1h-12zM67 75h12v1h-12zM2 76h15v1h-15zM34 76h15v1h-15zM66 76h15v1h-15zM2 77h14v1h-14zM34 77h14v1h-14zM66 77h14v1h-14zM1 78h15v1h-15zM33 78h15v1h-15zM65 78h15v1h-15zM1 79h14v1h-14zM33 79h14v1h-14zM65 79h14v1h-14zM0 80h15v1h-15zM32 80h15v1h-15zM64 80h15v1h-15zM0 81h14v1h-14zM32 81h14v1h-14zM64 81h14v1h-14zM0 82h14v1h-14zM32 82h14v1h-14zM64 82h14v1h-14zM2 83h11v1h-11zM34 83h11v1h-11zM66 83h11v1h-11zM4 84h9v1h-9zM36 84h9v1h-9zM68 84h9v1h-9zM6 85h6v1h-6zM38 85h6v1h-6zM70 85h6v1h-6zM8 86h4v1h-4zM40 86h4v1h-4zM72 86h4v1h-4zM10 87h1v1h-1zM42 87h1v1h-1zM74 87h1v1h-1zM24 96h1v1h-1zM56 96h1v1h-1zM88 96h1v1h-1zM24 97h3v1h-3zM56 97h3v1h-3zM88 97h2v1h-2zM23 98h6v1h-6zM55 98h6v1h-6zM87 98h3v1h-3zM23 99h8v1h-8zM55 99h8v1h-8zM87 99h3v1h-3zM0 100h1v1h-1zM22 100h11v1h-11zM54 100h11v1h-11zM86 100h4v1h-4zM0 101h3v1h-3zM22 101h13v1h-13zM54 101h13v1h-13zM86 101h4v1h-4zM0 102h4v1h-4zM21 102h15v1h-15zM53 102h15v1h-15zM85 102h5v1h-5zM0 103h3v1h-3zM21 103h14v1h-14zM53 103h14v1h-14zM85 103h5v1h-5zM0 104h3v1h-3zM20 104h15v1h-15zM52 104h15v1h-15zM84 104h6v1h-6zM0 105h2v1h-2zM20 105h14v1h-14zM52 105h14v1h-14zM84 105h6v1h-6zM0 106h2v1h-2zM19 106h15v1h-15zM51 106h15v1h-15zM83 106h7v1h-7zM0 107h1v1h-1zM19 107h14v1h-14zM51 107h14v1h-14zM83 107h7v1h-7zM0 108h1v1h-1zM20 108h13v1h-13zM52 108h13v1h-13zM84 108h6v1h-6zM22 109h10v1h-10zM54 109h10v1h-10zM86 109h4v1h-4zM24 110h8v1h-8zM56 110h8v1h-8zM88 110h2v1h-2zM26 111h5v1h-5zM58 111h5v1h-5zM28 112h3v1h-3zM60 112h3v1h-3zM11 122h2v1h-2zM43 122h2v1h-2zM75 122h2v1h-2zM11 123h4v1h-4zM43 123h4v1h-4zM75 123h4v1h-4zM10 124h7v1h-7zM42 124h7v1h-7zM74 124h7v1h-7zM10 125h9v1h-9zM42 125h9v1h-9zM74 125h9v1h-9zM9 126h12v1h-12zM41 126h12v1h-12zM73 126h12v1h-12zM9 127h14v1h-14zM41 127h14v1h-14zM73 127h14v1h-14zM8 128h15v1h-15zM40 128h15v1h-15zM72 128h15v1h-15zM8 129h14v1h-14zM40 129h14v1h-14zM72 129h14v1h-14zM7 130h15v1h-15zM39 130h15v1h-15zM71 130h15v1h-15zM7 131h14v1h-14zM39 131h14v1h-14zM71 131h14v1h-14zM6 132h15v1h-15zM38 132h15v1h-15zM70 132h15v1h-15zM6 133h14v1h-14zM38 133h14v1h-14zM70 133h14v1h-14zM8 134h12v1h-12zM40 134h12v1h-12zM72 134h12v1h-12zM10 135h9v1h-9zM42 135h9v1h-9zM74 135h9v1h-9zM12 136h7v1h-7zM44 136h7v1h-7zM76 136h7v1h-7zM14 137h4v1h-4zM46 137h4v1h-4zM78 137h4v1h-4zM16 138h2v1h-2zM48 138h2v1h-2zM80 138h2v1h-2zM0 148h1v1h-1zM30 148h3v1h-3zM62 148h3v1h-3zM0 149h3v1h-3zM30 149h5v1h-5zM62 149h5v1h-5zM0 150h5v1h-5zM29 150h8v1h-8zM61 150h8v1h-8zM0 151h7v1h-7zM29 151h10v1h-10zM61 151h10v1h-10zM0 152h9v1h-9zM28 152h13v1h-13zM60 152h13v1h-13zM0 153h10v1h-10zM28 153h14v1h-14zM60 153h14v1h-14zM0 154h10v1h-10zM27 154h15v1h-15zM59 154h15v1h-15zM0 155h9v1h-9zM27 155h14v1h-14zM59 155h14v1h-14zM0 156h9v1h-9zM26 156h15v1h-15zM58 156h15v1h-15zM0 157h8v1h-8zM26 157h14v1h-14zM58 157h14v1h-14zM0 158h8v1h-8zM25 158h15v1h-15zM57 158h15v1h-15zM89 158h1v1h-1zM0 159h7v1h-7zM26 159h13v1h-13zM58 159h13v1h-13z"/><path fill="#f03862" d="M0 0h7v1h-7zM28 0h11v1h-11zM60 0h11v1h-11zM0 1h6v1h-6zM30 1h8v1h-8zM62 1h8v1h-8zM0 2h6v1h-6zM32 2h6v1h-6zM64 2h6v1h-6zM2 3h3v1h-3zM34 3h3v1h-3zM66 3h3v1h-3zM4 4h1v1h-1zM36 4h1v1h-1zM68 4h1v1h-1zM18 13h1v1h-1zM50 13h1v1h-1zM82 13h1v1h-1zM17 14h4v1h-4zM49 14h4v1h-4zM81 14h4v1h-4zM17 15h6v1h-6zM49 15h6v1h-6zM81 15h6v1h-6zM16 16h9v1h-9zM48 16h9v1h-9zM80 16h9v1h-9zM16 17h11v1h-11zM48 17h11v1h-11zM80 17h10v1h-10zM15 18h14v1h-14zM47 18h14v1h-14zM79 18h11v1h-11zM15 19h14v1h-14zM47 19h14v1h-14zM79 19h11v1h-11zM14 20h15v1h-15zM46 20h15v1h-15zM78 20h12v1h-12zM14 21h14v1h-14zM46 21h14v1h-14zM78 21h12v1h-12zM13 22h15v1h-15zM45 22h15v1h-15zM77 22h13v1h-13zM13 23h14v1h-14zM45 23h14v1h-14zM77 23h13v1h-13zM12 24h15v1h-15zM44 24h15v1h-15zM76 24h14v1h-14zM14 25h12v1h-12zM46 25h12v1h-12zM78 25h12v1h-12zM16 26h10v1h-10zM48 26h10v1h-10zM80 26h10v1h-10zM18 27h7v1h-7zM50 27h7v1h-7zM82 27h7v1h-7zM20 28h5v1h-5zM52 28h5v1h-5zM84 28h5v1h-5zM22 29h2v1h-2zM54 29h2v1h-2zM86 29h2v1h-2zM5 39h2v1h-2zM37 39h2v1h-2zM69 39h2v1h-2zM4 40h5v1h-5zM36 40h5v1h-5zM68 40h5v1h-5zM4 41h7v1h-7zM36 41h7v1h-7zM68 41h7v1h-7zM3 42h10v1h-10zM35 42h10v1h-10zM67 42h10v1h-10zM3 43h12v1h-12zM35 43h12v1h-12zM67 43h12v1h-12zM2 44h15v1h-15zM34 44h15v1h-15zM66 44h15v1h-15zM2 45h14v1h-14zM34 45h14v1h-14zM66 45h14v1h-14zM1 46h15v1h-15zM33 46h15v1h-15zM65 46h15v1h-15zM1 47h14v1h-14zM33 47h14v1h-14zM65 47h14v1h-14zM0 48h15v1h-15zM32 48h15v1h-15zM64 48h15v1h-15zM0 49h14v1h-14zM32 49h14v1h-14zM64 49h14v1h-14zM0 50h14v1h-14zM32 50h14v1h-14zM64 50h14v1h-14zM2 51h11v1h-11zM34 51h11v1h-11zM66 51h11v1h-11zM4 52h9v1h-9zM36 52h9v1h-9zM68 52h9v1h-9zM6 53h6v1h-6zM38 53h6v1h-6zM70 53h6v1h-6zM8 54h4v1h-4zM40 54h4v1h-4zM72 54h4v1h-4zM10 55h1v1h-1zM42 55h1v1h-1zM74 55h1v1h-1zM24 64h1v1h-1zM56 64h1v1h-1zM88 64h1v1h-1zM24 65h3v1h-3zM56 65h3v1h-3zM88 65h2v1h-2zM23 66h6v1h-6zM55 66h6v1h-6zM87 66h3v1h-3zM23 67h8v1h-8zM55 67h8v1h-8zM87 67h3v1h-3zM0 68h1v1h-1zM22 68h11v1h-11zM54 68h11v1h-11zM86 68h4v1h-4zM0 69h3v1h-3zM22 69h13v1h-13zM54 69h13v1h-13zM86 69h4v1h-4zM0 70h4v1h-4zM21 70h15v1h-15zM53 70h15v1h-15zM85 70h5v1h-5zM0 71h3v1h-3zM21 71h14v1h-14zM53 71h14v1h-14zM85 71h5v1h-5zM0 72h3v1h-3zM20 72h15v1h-15zM52 72h15v1h-15zM84 72h6v1h-6zM0 73h2v1h-2zM20 73h14v1h-14zM52 73h14v1h-14zM84 73h6v1h-6zM0 74h2v1h-2zM19 74h15v1h-15zM51 74h15v1h-15zM83 74h7v1h-7zM0 75h1v1h-1zM19 75h14v1h-14zM51 75h14v1h-14zM83 75h7v1h-7zM0 76h1v1h-1zM20 76h13v1h-13zM52 76h13v1h-13zM84 76h6v1h-6zM22 77h10v1h-10zM54 77h10v1h-10zM86 77h4v1h-4zM24 78h8v1h-8zM56 78h8v1h-8zM88 78h2v1h-2zM26 79h5v1h-5zM58 79h5v1h-5zM28 80h3v1h-3zM60 80h3v1h-3zM11 90h2v1h-2zM43 90h2v1h-2zM75 90h2v1h-2zM11 91h4v1h-4zM43 91h4v1h-4zM75 91h4v1h-4zM10 92h7v1h-7zM42 92h7v1h-7zM74 92h7v1h-7zM10 93h9v1h-9zM42 93h9v1h-9zM74 93h9v1h-9zM9 94h12v1h-12zM41 94h12v1h-12zM73 94h12v1h-12zM9 95h14v1h-14zM41 95h14v1h-14zM73 95h14v1h-14zM8 96h15v1h-15zM40 96h15v1h-15zM72 96h15v1h-15zM8 97h14v1h-14zM40 97h14v1h-14zM72 97h14v1h-14zM7 98h15v1h-15zM39 98h15v1h-15zM71 98h15v1h-15zM7 99h14v1h-14zM39 99h14v1h-14zM71 99h14v1h-14zM6 100h15v1h-15zM38 100h15v1h-15zM70 100h15v1h-15zM6 101h14v1h-14zM38 101h14v1h-14zM70 101h14v1h-14zM8 102h12v1h-12zM40 102h12v1h-12zM72 102h12v1h-12zM10 103h9v1h-9zM42 103h9v1h-9zM74 103h9v1h-9zM12 104h7v1h-7zM44 104h7v1h-7zM76 104h7v1h-7zM14 105h4v1h-4zM46 105h4v1h-4zM78 105h4v1h-4zM16 106h2v1h-2zM48 106h2v1h-2zM80 106h2v1h-2zM0 116h1v1h-1zM30 116h3v1h-3zM62 116h3v1h-3zM0 117h3v1h-3zM30 117h5v1h-5zM62 117h5v1h-5zM0 118h5v1h-5zM29 118h8v1h-8zM61 118h8v1h-8zM0 119h7v1h-7zM29 119h10v1h-10zM61 119h10v1h-10zM0 120h9v1h-9zM28 120h13v1h-13zM60 120h13v1h-13zM0 121h10v1h-10zM28 121h14v1h-14zM60 121h14v1h-14zM0 122h10v1h-10zM27 122h15v1h-15zM59 122h15v1h-15zM0 123h9v1h-9zM27 123h14v1h-14zM59 123h14v1h-14zM0 124h9v1h-9zM26 124h15v1h-15zM58 124h15v1h-15zM0 125h8v1h-8zM26 125h14v1h-14zM58 125h14v1h-14zM0 126h8v1h-8zM25 126h15v1h-15zM57 126h15v1h-15zM89 126h1v1h-1zM0 127h7v1h-7zM26 127h13v1h-13zM58 127h13v1h-13zM0 128h7v1h-7zM28 128h11v1h-11zM60 128h11v1h-11zM0 129h6v1h-6zM30 129h8v1h-8zM62 129h8v1h-8zM0 130h6v1h-6zM32 130h6v1h-6zM64 130h6v1h-6zM2 131h3v1h-3zM34 131h3v1h-3zM66 131h3v1h-3zM4 132h1v1h-1zM36 132h1v1h-1zM68 132h1v1h-1zM18 141h1v1h-1zM50 141h1v1h-1zM82 141h1v1h-1zM17 142h4v1h-4zM49 142h4v1h-4zM81 142h4v1h-4zM17 143h6v1h-6zM49 143h6v1h-6zM81 143h6v1h-6zM16 144h9v1h-9zM48 144h9v1h-9zM80 144h9v1h-9zM16 145h11v1h-11zM48 145h11v1h-11zM80 145h10v1h-10zM15 146h14v1h-14zM47 146h14v1h-14zM79 146h11v1h-11zM15 147h14v1h-14zM47 147h14v1h-14zM79 147h11v1h-11zM14 148h15v1h-15zM46 148h15v1h-15zM78 148h12v1h-12zM14 149h14v1h-14zM46 149h14v1h-14zM78 149h12v1h-12zM13 150h15v1h-15zM45 150h15v1h-15zM77 150h13v1h-13zM13 151h14v1h-14zM45 151h14v1h-14zM77 151h13v1h-13zM12 152h15v1h-15zM44 152h15v1h-15zM76 152h14v1h-14zM14 153h12v1h-12zM46 153h12v1h-12zM78 153h12v1h-12zM16 154h10v1h-10zM48 154h10v1h-10zM80 154h10v1h-10zM18 155h7v1h-7zM50 155h7v1h-7zM82 155h7v1h-7zM20 156h5v1h-5zM52 156h5v1h-5zM84 156h5v1h-5zM22 157h2v1h-2zM54 157h2v1h-2zM86 157h2v1h-2z"/><path fill="#24245c" opacity="0.9" d="M9.12 0.12h.76v.76h-.76zM13.12 0.12h.76v.76h-.76zM17.12 0.12h.76v.76h-.76zM21.12 0.12h.76v.76h-.76zM41.12 0.12h.76v.76h-.76zM45.12 0.12h.76v.76h-.76zM49.12 0.12h.76v.76h-.76zM53.12 0.12h.76v.76h-.76zM73.12 0.12h.76v.76h-.76zM77.12 0.12h.76v.76h-.76zM81.12 0.12h.76v.76h-.76zM85.12 0.12h.76v.76h-.76zM7.12 2.12h.76v.76h-.76zM11.12 2.12h.76v.76h-.76zM15.12 2.12h.76v.76h-.76zM19.12 2.12h.76v.76h-.76zM23.12 2.12h.76v.76h-.76zM27.12 2.12h.76v.76h-.76zM39.12 2.12h.76v.76h-.76zM43.12 2.12h.76v.76h-.76zM47.12 2.12h.76v.76h-.76zM51.12 2.12h.76v.76h-.76zM55.12 2.12h.76v.76h-.76zM59.12 2.12h.76v.76h-.76zM71.12 2.12h.76v.76h-.76zM75.12 2.12h.76v.76h-.76zM79.12 2.12h.76v.76h-.76zM83.12 2.12h.76v.76h-.76zM87.12 2.12h.76v.76h-.76zM9.12 4.12h.76v.76h-.76zM13.12 4.12h.76v.76h-.76zM17.12 4.12h.76v.76h-.76zM25.12 4.12h.76v.76h-.76zM29.12 4.12h.76v.76h-.76zM41.12 4.12h.76v.76h-.76zM45.12 4.12h.76v.76h-.76zM49.12 4.12h.76v.76h-.76zM57.12 4.12h.76v.76h-.76zM61.12 4.12h.76v.76h-.76zM73.12 4.12h.76v.76h-.76zM77.12 4.12h.76v.76h-.76zM81.12 4.12h.76v.76h-.76zM89.12 4.12h.76v.76h-.76zM3.12 6.12h.76v.76h-.76zM11.12 6.12h.76v.76h-.76zM15.12 6.12h.76v.76h-.76zM19.12 6.12h.76v.76h-.76zM23.12 6.12h.76v.76h-.76zM27.12 6.12h.76v.76h-.76zM31.12 6.12h.76v.76h-.76zM35.12 6.12h.76v.76h-.76zM43.12 6.12h.76v.76h-.76zM47.12 6.12h.76v.76h-.76zM51.12 6.12h.76v.76h-.76zM55.12 6.12h.76v.76h-.76zM59.12 6.12h.76v.76h-.76zM63.12 6.12h.76v.76h-.76zM67.12 6.12h.76v.76h-.76zM75.12 6.12h.76v.76h-.76zM79.12 6.12h.76v.76h-.76zM83.12 6.12h.76v.76h-.76zM87.12 6.12h.76v.76h-.76zM1.12 8.12h.76v.76h-.76zM13.12 8.12h.76v.76h-.76zM17.12 8.12h.76v.76h-.76zM21.12 8.12h.76v.76h-.76zM25.12 8.12h.76v.76h-.76zM29.12 8.12h.76v.76h-.76zM33.12 8.12h.76v.76h-.76zM45.12 8.12h.76v.76h-.76zM49.12 8.12h.76v.76h-.76zM53.12 8.12h.76v.76h-.76zM57.12 8.12h.76v.76h-.76zM61.12 8.12h.76v.76h-.76zM65.12 8.12h.76v.76h-.76zM77.12 8.12h.76v.76h-.76zM81.12 8.12h.76v.76h-.76zM85.12 8.12h.76v.76h-.76zM89.12 8.12h.76v.76h-.76zM19.12 10.12h.76v.76h-.76zM23.12 10.12h.76v.76h-.76zM27.12 10.12h.76v.76h-.76zM31.12 10.12h.76v.76h-.76zM51.12 10.12h.76v.76h-.76zM55.12 10.12h.76v.76h-.76zM59.12 10.12h.76v.76h-.76zM63.12 10.12h.76v.76h-.76zM83.12 10.12h.76v.76h-.76zM87.12 10.12h.76v.76h-.76zM21.12 12.12h.76v.76h-.76zM25.12 12.12h.76v.76h-.76zM29.12 12.12h.76v.76h-.76zM53.12 12.12h.76v.76h-.76zM57.12 12.12h.76v.76h-.76zM61.12 12.12h.76v.76h-.76zM85.12 12.12h.76v.76h-.76zM89.12 12.12h.76v.76h-.76zM27.12 14.12h.76v.76h-.76zM31.12 14.12h.76v.76h-.76zM59.12 14.12h.76v.76h-.76zM63.12 14.12h.76v.76h-.76zM29.12 16.12h.76v.76h-.76zM61.12 16.12h.76v.76h-.76zM3.12 22.12h.76v.76h-.76zM31.12 22.12h.76v.76h-.76zM35.12 22.12h.76v.76h-.76zM63.12 22.12h.76v.76h-.76zM67.12 22.12h.76v.76h-.76zM1.12 24.12h.76v.76h-.76zM5.12 24.12h.76v.76h-.76zM29.12 24.12h.76v.76h-.76zM33.12 24.12h.76v.76h-.76zM37.12 24.12h.76v.76h-.76zM61.12 24.12h.76v.76h-.76zM65.12 24.12h.76v.76h-.76zM69.12 24.12h.76v.76h-.76zM3.12 26.12h.76v.76h-.76zM7.12 26.12h.76v.76h-.76zM11.12 26.12h.76v.76h-.76zM27.12 26.12h.76v.76h-.76zM31.12 26.12h.76v.76h-.76zM35.12 26.12h.76v.76h-.76zM39.12 26.12h.76v.76h-.76zM43.12 26.12h.76v.76h-.76zM59.12 26.12h.76v.76h-.76zM63.12 26.12h.76v.76h-.76zM67.12 26.12h.76v.76h-.76zM71.12 26.12h.76v.76h-.76zM75.12 26.12h.76v.76h-.76zM1.12 28.12h.76v.76h-.76zM5.12 28.12h.76v.76h-.76zM13.12 28.12h.76v.76h-.76zM29.12 28.12h.76v.76h-.76zM33.12 28.12h.76v.76h-.76zM37.12 28.12h.76v.76h-.76zM45.12 28.12h.76v.76h-.76zM61.12 28.12h.76v.76h-.76zM65.12 28.12h.76v.76h-.76zM69.12 28.12h.76v.76h-.76zM77.12 28.12h.76v.76h-.76zM3.12 30.12h.76v.76h-.76zM7.12 30.12h.76v.76h-.76zM11.12 30.12h.76v.76h-.76zM15.12 30.12h.76v.76h-.76zM19.12 30.12h.76v.76h-.76zM27.12 30.12h.76v.76h-.76zM31.12 30.12h.76v.76h-.76zM35.12 30.12h.76v.76h-.76zM39.12 30.12h.76v.76h-.76zM43.12 30.12h.76v.76h-.76zM47.12 30.12h.76v.76h-.76zM51.12 30.12h.76v.76h-.76zM59.12 30.12h.76v.76h-.76zM63.12 30.12h.76v.76h-.76zM67.12 30.12h.76v.76h-.76zM71.12 30.12h.76v.76h-.76zM75.12 30.12h.76v.76h-.76zM79.12 30.12h.76v.76h-.76zM83.12 30.12h.76v.76h-.76zM1.12 32.12h.76v.76h-.76zM5.12 32.12h.76v.76h-.76zM9.12 32.12h.76v.76h-.76zM13.12 32.12h.76v.76h-.76zM17.12 32.12h.76v.76h-.76zM21.12 32.12h.76v.76h-.76zM29.12 32.12h.76v.76h-.76zM33.12 32.12h.76v.76h-.76zM37.12 32.12h.76v.76h-.76zM41.12 32.12h.76v.76h-.76zM45.12 32.12h.76v.76h-.76zM49.12 32.12h.76v.76h-.76zM53.12 32.12h.76v.76h-.76zM61.12 32.12h.76v.76h-.76zM65.12 32.12h.76v.76h-.76zM69.12 32.12h.76v.76h-.76zM73.12 32.12h.76v.76h-.76zM77.12 32.12h.76v.76h-.76zM81.12 32.12h.76v.76h-.76zM85.12 32.12h.76v.76h-.76zM3.12 34.12h.76v.76h-.76zM7.12 34.12h.76v.76h-.76zM11.12 34.12h.76v.76h-.76zM15.12 34.12h.76v.76h-.76zM19.12 34.12h.76v.76h-.76zM35.12 34.12h.76v.76h-.76zM39.12 34.12h.76v.76h-.76zM43.12 34.12h.76v.76h-.76zM47.12 34.12h.76v.76h-.76zM51.12 34.12h.76v.76h-.76zM67.12 34.12h.76v.76h-.76zM71.12 34.12h.76v.76h-.76zM75.12 34.12h.76v.76h-.76zM79.12 34.12h.76v.76h-.76zM83.12 34.12h.76v.76h-.76zM9.12 36.12h.76v.76h-.76zM13.12 36.12h.76v.76h-.76zM17.12 36.12h.76v.76h-.76zM41.12 36.12h.76v.76h-.76zM45.12 36.12h.76v.76h-.76zM49.12 36.12h.76v.76h-.76zM73.12 36.12h.76v.76h-.76zM77.12 36.12h.76v.76h-.76zM81.12 36.12h.76v.76h-.76zM11.12 38.12h.76v.76h-.76zM15.12 38.12h.76v.76h-.76zM19.12 38.12h.76v.76h-.76zM43.12 38.12h.76v.76h-.76zM47.12 38.12h.76v.76h-.76zM51.12 38.12h.76v.76h-.76zM75.12 38.12h.76v.76h-.76zM79.12 38.12h.76v.76h-.76zM83.12 38.12h.76v.76h-.76zM13.12 40.12h.76v.76h-.76zM17.12 40.12h.76v.76h-.76zM45.12 40.12h.76v.76h-.76zM49.12 40.12h.76v.76h-.76zM77.12 40.12h.76v.76h-.76zM81.12 40.12h.76v.76h-.76zM19.12 46.12h.76v.76h-.76zM51.12 46.12h.76v.76h-.76zM83.12 46.12h.76v.76h-.76zM17.12 48.12h.76v.76h-.76zM21.12 48.12h.76v.76h-.76zM49.12 48.12h.76v.76h-.76zM53.12 48.12h.76v.76h-.76zM81.12 48.12h.76v.76h-.76zM85.12 48.12h.76v.76h-.76zM15.12 50.12h.76v.76h-.76zM19.12 50.12h.76v.76h-.76zM23.12 50.12h.76v.76h-.76zM27.12 50.12h.76v.76h-.76zM47.12 50.12h.76v.76h-.76zM51.12 50.12h.76v.76h-.76zM55.12 50.12h.76v.76h-.76zM59.12 50.12h.76v.76h-.76zM79.12 50.12h.76v.76h-.76zM83.12 50.12h.76v.76h-.76zM87.12 50.12h.76v.76h-.76zM17.12 52.12h.76v.76h-.76zM21.12 52.12h.76v.76h-.76zM25.12 52.12h.76v.76h-.76zM49.12 52.12h.76v.76h-.76zM53.12 52.12h.76v.76h-.76zM57.12 52.12h.76v.76h-.76zM81.12 52.12h.76v.76h-.76zM85.12 52.12h.76v.76h-.76zM89.12 52.12h.76v.76h-.76zM3.12 54.12h.76v.76h-.76zM15.12 54.12h.76v.76h-.76zM19.12 54.12h.76v.76h-.76zM23.12 54.12h.76v.76h-.76zM27.12 54.12h.76v.76h-.76zM31.12 54.12h.76v.76h-.76zM35.12 54.12h.76v.76h-.76zM47.12 54.12h.76v.76h-.76zM51.12 54.12h.76v.76h-.76zM55.12 54.12h.76v.76h-.76zM59.12 54.12h.76v.76h-.76zM63.12 54.12h.76v.76h-.76zM67.12 54.12h.76v.76h-.76zM79.12 54.12h.76v.76h-.76zM83.12 54.12h.76v.76h-.76zM87.12 54.12h.76v.76h-.76zM1.12 56.12h.76v.76h-.76zM5.12 56.12h.76v.76h-.76zM13.12 56.12h.76v.76h-.76zM17.12 56.12h.76v.76h-.76zM21.12 56.12h.76v.76h-.76zM25.12 56.12h.76v.76h-.76zM29.12 56.12h.76v.76h-.76zM33.12 56.12h.76v.76h-.76zM37.12 56.12h.76v.76h-.76zM45.12 56.12h.76v.76h-.76zM49.12 56.12h.76v.76h-.76zM53.12 56.12h.76v.76h-.76zM57.12 56.12h.76v.76h-.76zM61.12 56.12h.76v.76h-.76zM65.12 56.12h.76v.76h-.76zM69.12 56.12h.76v.76h-.76zM77.12 56.12h.76v.76h-.76zM81.12 56.12h.76v.76h-.76zM85.12 56.12h.76v.76h-.76zM89.12 56.12h.76v.76h-.76zM3.12 58.12h.76v.76h-.76zM7.12 58.12h.76v.76h-.76zM19.12 58.12h.76v.76h-.76zM23.12 58.12h.76v.76h-.76zM27.12 58.12h.76v.76h-.76zM31.12 58.12h.76v.76h-.76zM35.12 58.12h.76v.76h-.76zM39.12 58.12h.76v.76h-.76zM51.12 58.12h.76v.76h-.76zM55.12 58.12h.76v.76h-.76zM59.12 58.12h.76v.76h-.76zM63.12 58.12h.76v.76h-.76zM67.12 58.12h.76v.76h-.76zM71.12 58.12h.76v.76h-.76zM83.12 58.12h.76v.76h-.76zM87.12 58.12h.76v.76h-.76zM1.12 60.12h.76v.76h-.76zM5.12 60.12h.76v.76h-.76zM21.12 60.12h.76v.76h-.76zM29.12 60.12h.76v.76h-.76zM33.12 60.12h.76v.76h-.76zM37.12 60.12h.76v.76h-.76zM53.12 60.12h.76v.76h-.76zM61.12 60.12h.76v.76h-.76zM65.12 60.12h.76v.76h-.76zM69.12 60.12h.76v.76h-.76zM85.12 60.12h.76v.76h-.76zM3.12 62.12h.76v.76h-.76zM7.12 62.12h.76v.76h-.76zM27.12 62.12h.76v.76h-.76zM31.12 62.12h.76v.76h-.76zM35.12 62.12h.76v.76h-.76zM39.12 62.12h.76v.76h-.76zM59.12 62.12h.76v.76h-.76zM63.12 62.12h.76v.76h-.76zM67.12 62.12h.76v.76h-.76zM71.12 62.12h.76v.76h-.76zM1.12 64.12h.76v.76h-.76zM5.12 64.12h.76v.76h-.76zM29.12 64.12h.76v.76h-.76zM33.12 64.12h.76v.76h-.76zM37.12 64.12h.76v.76h-.76zM61.12 64.12h.76v.76h-.76zM65.12 64.12h.76v.76h-.76zM69.12 64.12h.76v.76h-.76zM3.12 66.12h.76v.76h-.76zM35.12 66.12h.76v.76h-.76zM67.12 66.12h.76v.76h-.76zM5.12 72.12h.76v.76h-.76zM37.12 72.12h.76v.76h-.76zM69.12 72.12h.76v.76h-.76zM3.12 74.12h.76v.76h-.76zM7.12 74.12h.76v.76h-.76zM11.12 74.12h.76v.76h-.76zM35.12 74.12h.76v.76h-.76zM39.12 74.12h.76v.76h-.76zM43.12 74.12h.76v.76h-.76zM67.12 74.12h.76v.76h-.76zM71.12 74.12h.76v.76h-.76zM75.12 74.12h.76v.76h-.76zM5.12 76.12h.76v.76h-.76zM9.12 76.12h.76v.76h-.76zM13.12 76.12h.76v.76h-.76zM37.12 76.12h.76v.76h-.76zM41.12 76.12h.76v.76h-.76zM45.12 76.12h.76v.76h-.76zM69.12 76.12h.76v.76h-.76zM73.12 76.12h.76v.76h-.76zM77.12 76.12h.76v.76h-.76zM3.12 78.12h.76v.76h-.76zM7.12 78.12h.76v.76h-.76zM11.12 78.12h.76v.76h-.76zM15.12 78.12h.76v.76h-.76zM19.12 78.12h.76v.76h-.76zM35.12 78.12h.76v.76h-.76zM39.12 78.12h.76v.76h-.76zM43.12 78.12h.76v.76h-.76zM47.12 78.12h.76v.76h-.76zM51.12 78.12h.76v.76h-.76zM67.12 78.12h.76v.76h-.76zM71.12 78.12h.76v.76h-.76zM75.12 78.12h.76v.76h-.76zM79.12 78.12h.76v.76h-.76zM83.12 78.12h.76v.76h-.76zM1.12 80.12h.76v.76h-.76zM5.12 80.12h.76v.76h-.76zM9.12 80.12h.76v.76h-.76zM13.12 80.12h.76v.76h-.76zM17.12 80.12h.76v.76h-.76zM21.12 80.12h.76v.76h-.76zM33.12 80.12h.76v.76h-.76zM37.12 80.12h.76v.76h-.76zM41.12 80.12h.76v.76h-.76zM45.12 80.12h.76v.76h-.76zM49.12 80.12h.76v.76h-.76zM53.12 80.12h.76v.76h-.76zM65.12 80.12h.76v.76h-.76zM69.12 80.12h.76v.76h-.76zM73.12 80.12h.76v.76h-.76zM77.12 80.12h.76v.76h-.76zM81.12 80.12h.76v.76h-.76zM85.12 80.12h.76v.76h-.76zM3.12 82.12h.76v.76h-.76zM7.12 82.12h.76v.76h-.76zM11.12 82.12h.76v.76h-.76zM15.12 82.12h.76v.76h-.76zM19.12 82.12h.76v.76h-.76zM23.12 82.12h.76v.76h-.76zM27.12 82.12h.76v.76h-.76zM35.12 82.12h.76v.76h-.76zM39.12 82.12h.76v.76h-.76zM43.12 82.12h.76v.76h-.76zM47.12 82.12h.76v.76h-.76zM51.12 82.12h.76v.76h-.76zM55.12 82.12h.76v.76h-.76zM59.12 82.12h.76v.76h-.76zM67.12 82.12h.76v.76h-.76zM71.12 82.12h.76v.76h-.76zM75.12 82.12h.76v.76h-.76zM79.12 82.12h.76v.76h-.76zM83.12 82.12h.76v.76h-.76zM87.12 82.12h.76v.76h-.76zM5.12 84.12h.76v.76h-.76zM9.12 84.12h.76v.76h-.76zM17.12 84.12h.76v.76h-.76zM21.12 84.12h.76v.76h-.76zM25.12 84.12h.76v.76h-.76zM37.12 84.12h.76v.76h-.76zM41.12 84.12h.76v.76h-.76zM49.12 84.12h.76v.76h-.76zM53.12 84.12h.76v.76h-.76zM57.12 84.12h.76v.76h-.76zM69.12 84.12h.76v.76h-.76zM73.12 84.12h.76v.76h-.76zM81.12 84.12h.76v.76h-.76zM85.12 84.12h.76v.76h-.76zM89.12 84.12h.76v.76h-.76zM11.12 86.12h.76v.76h-.76zM15.12 86.12h.76v.76h-.76zM19.12 86.12h.76v.76h-.76zM23.12 86.12h.76v.76h-.76zM27.12 86.12h.76v.76h-.76zM43.12 86.12h.76v.76h-.76zM47.12 86.12h.76v.76h-.76zM51.12 86.12h.76v.76h-.76zM55.12 86.12h.76v.76h-.76zM59.12 86.12h.76v.76h-.76zM75.12 86.12h.76v.76h-.76zM79.12 86.12h.76v.76h-.76zM83.12 86.12h.76v.76h-.76zM87.12 86.12h.76v.76h-.76zM13.12 88.12h.76v.76h-.76zM17.12 88.12h.76v.76h-.76zM21.12 88.12h.76v.76h-.76zM25.12 88.12h.76v.76h-.76zM45.12 88.12h.76v.76h-.76zM49.12 88.12h.76v.76h-.76zM53.12 88.12h.76v.76h-.76zM57.12 88.12h.76v.76h-.76zM77.12 88.12h.76v.76h-.76zM81.12 88.12h.76v.76h-.76zM85.12 88.12h.76v.76h-.76zM89.12 88.12h.76v.76h-.76zM19.12 90.12h.76v.76h-.76zM23.12 90.12h.76v.76h-.76zM51.12 90.12h.76v.76h-.76zM55.12 90.12h.76v.76h-.76zM83.12 90.12h.76v.76h-.76zM87.12 90.12h.76v.76h-.76zM21.12 92.12h.76v.76h-.76zM53.12 92.12h.76v.76h-.76zM85.12 92.12h.76v.76h-.76zM23.12 98.12h.76v.76h-.76zM27.12 98.12h.76v.76h-.76zM55.12 98.12h.76v.76h-.76zM59.12 98.12h.76v.76h-.76zM87.12 98.12h.76v.76h-.76zM25.12 100.12h.76v.76h-.76zM29.12 100.12h.76v.76h-.76zM57.12 100.12h.76v.76h-.76zM61.12 100.12h.76v.76h-.76zM89.12 100.12h.76v.76h-.76zM3.12 102.12h.76v.76h-.76zM23.12 102.12h.76v.76h-.76zM27.12 102.12h.76v.76h-.76zM31.12 102.12h.76v.76h-.76zM35.12 102.12h.76v.76h-.76zM55.12 102.12h.76v.76h-.76zM59.12 102.12h.76v.76h-.76zM63.12 102.12h.76v.76h-.76zM67.12 102.12h.76v.76h-.76zM87.12 102.12h.76v.76h-.76zM1.12 104.12h.76v.76h-.76zM5.12 104.12h.76v.76h-.76zM21.12 104.12h.76v.76h-.76zM25.12 104.12h.76v.76h-.76zM29.12 104.12h.76v.76h-.76zM33.12 104.12h.76v.76h-.76zM37.12 104.12h.76v.76h-.76zM53.12 104.12h.76v.76h-.76zM57.12 104.12h.76v.76h-.76zM61.12 104.12h.76v.76h-.76zM65.12 104.12h.76v.76h-.76zM69.12 104.12h.76v.76h-.76zM85.12 104.12h.76v.76h-.76zM89.12 104.12h.76v.76h-.76zM3.12 106.12h.76v.76h-.76zM7.12 106.12h.76v.76h-.76zM11.12 106.12h.76v.76h-.76zM19.12 106.12h.76v.76h-.76zM23.12 106.12h.76v.76h-.76zM27.12 106.12h.76v.76h-.76zM31.12 106.12h.76v.76h-.76zM35.12 106.12h.76v.76h-.76zM39.12 106.12h.76v.76h-.76zM43.12 106.12h.76v.76h-.76zM51.12 106.12h.76v.76h-.76zM55.12 106.12h.76v.76h-.76zM59.12 106.12h.76v.76h-.76zM63.12 106.12h.76v.76h-.76zM67.12 106.12h.76v.76h-.76zM71.12 106.12h.76v.76h-.76zM75.12 106.12h.76v.76h-.76zM83.12 106.12h.76v.76h-.76zM87.12 106.12h.76v.76h-.76zM5.12 108.12h.76v.76h-.76zM9.12 108.12h.76v.76h-.76zM13.12 108.12h.76v.76h-.76zM21.12 108.12h.76v.76h-.76zM25.12 108.12h.76v.76h-.76zM29.12 108.12h.76v.76h-.76zM37.12 108.12h.76v.76h-.76zM41.12 108.12h.76v.76h-.76zM45.12 108.12h.76v.76h-.76zM53.12 108.12h.76v.76h-.76zM57.12 108.12h.76v.76h-.76zM61.12 108.12h.76v.76h-.76zM69.12 108.12h.76v.76h-.76zM73.12 108.12h.76v.76h-.76zM77.12 108.12h.76v.76h-.76zM85.12 108.12h.76v.76h-.76zM89.12 108.12h.76v.76h-.76zM3.12 110.12h.76v.76h-.76zM7.12 110.12h.76v.76h-.76zM11.12 110.12h.76v.76h-.76zM15.12 110.12h.76v.76h-.76zM27.12 110.12h.76v.76h-.76zM31.12 110.12h.76v.76h-.76zM35.12 110.12h.76v.76h-.76zM39.12 110.12h.76v.76h-.76zM43.12 110.12h.76v.76h-.76zM47.12 110.12h.76v.76h-.76zM59.12 110.12h.76v.76h-.76zM63.12 110.12h.76v.76h-.76zM67.12 110.12h.76v.76h-.76zM71.12 110.12h.76v.76h-.76zM75.12 110.12h.76v.76h-.76zM79.12 110.12h.76v.76h-.76zM1.12 112.12h.76v.76h-.76zM5.12 112.12h.76v.76h-.76zM9.12 112.12h.76v.76h-.76zM13.12 112.12h.76v.76h-.76zM29.12 112.12h.76v.76h-.76zM33.12 112.12h.76v.76h-.76zM37.12 112.12h.76v.76h-.76zM41.12 112.12h.76v.76h-.76zM45.12 112.12h.76v.76h-.76zM61.12 112.12h.76v.76h-.76zM65.12 112.12h.76v.76h-.76zM69.12 112.12h.76v.76h-.76zM73.12 112.12h.76v.76h-.76zM77.12 112.12h.76v.76h-.76zM3.12 114.12h.76v.76h-.76zM7.12 114.12h.76v.76h-.76zM11.12 114.12h.76v.76h-.76zM35.12 114.12h.76v.76h-.76zM39.12 114.12h.76v.76h-.76zM43.12 114.12h.76v.76h-.76zM67.12 114.12h.76v.76h-.76zM71.12 114.12h.76v.76h-.76zM75.12 114.12h.76v.76h-.76zM5.12 116.12h.76v.76h-.76zM9.12 116.12h.76v.76h-.76zM37.12 116.12h.76v.76h-.76zM41.12 116.12h.76v.76h-.76zM69.12 116.12h.76v.76h-.76zM73.12 116.12h.76v.76h-.76zM11.12 118.12h.76v.76h-.76zM43.12 118.12h.76v.76h-.76zM75.12 118.12h.76v.76h-.76zM11.12 122.12h.76v.76h-.76zM43.12 122.12h.76v.76h-.76zM75.12 122.12h.76v.76h-.76zM13.12 124.12h.76v.76h-.76zM45.12 124.12h.76v.76h-.76zM77.12 124.12h.76v.76h-.76zM11.12 126.12h.76v.76h-.76zM15.12 126.12h.76v.76h-.76zM19.12 126.12h.76v.76h-.76zM43.12 126.12h.76v.76h-.76zM47.12 126.12h.76v.76h-.76zM51.12 126.12h.76v.76h-.76zM75.12 126.12h.76v.76h-.76zM79.12 126.12h.76v.76h-.76zM83.12 126.12h.76v.76h-.76zM9.12 128.12h.76v.76h-.76zM13.12 128.12h.76v.76h-.76zM17.12 128.12h.76v.76h-.76zM21.12 128.12h.76v.76h-.76zM41.12 128.12h.76v.76h-.76zM45.12 128.12h.76v.76h-.76zM49.12 128.12h.76v.76h-.76zM53.12 128.12h.76v.76h-.76zM73.12 128.12h.76v.76h-.76zM77.12 128.12h.76v.76h-.76zM81.12 128.12h.76v.76h-.76zM85.12 128.12h.76v.76h-.76zM7.12 130.12h.76v.76h-.76zM11.12 130.12h.76v.76h-.76zM15.12 130.12h.76v.76h-.76zM19.12 130.12h.76v.76h-.76zM23.12 130.12h.76v.76h-.76zM27.12 130.12h.76v.76h-.76zM39.12 130.12h.76v.76h-.76zM43.12 130.12h.76v.76h-.76zM47.12 130.12h.76v.76h-.76zM51.12 130.12h.76v.76h-.76zM55.12 130.12h.76v.76h-.76zM59.12 130.12h.76v.76h-.76zM71.12 130.12h.76v.76h-.76zM75.12 130.12h.76v.76h-.76zM79.12 130.12h.76v.76h-.76zM83.12 130.12h.76v.76h-.76zM87.12 130.12h.76v.76h-.76zM9.12 132.12h.76v.76h-.76zM13.12 132.12h.76v.76h-.76zM17.12 132.12h.76v.76h-.76zM25.12 132.12h.76v.76h-.76zM29.12 132.12h.76v.76h-.76zM41.12 132.12h.76v.76h-.76zM45.12 132.12h.76v.76h-.76zM49.12 132.12h.76v.76h-.76zM57.12 132.12h.76v.76h-.76zM61.12 132.12h.76v.76h-.76zM73.12 132.12h.76v.76h-.76zM77.12 132.12h.76v.76h-.76zM81.12 132.12h.76v.76h-.76zM89.12 132.12h.76v.76h-.76zM3.12 134.12h.76v.76h-.76zM11.12 134.12h.76v.76h-.76zM15.12 134.12h.76v.76h-.76zM19.12 134.12h.76v.76h-.76zM23.12 134.12h.76v.76h-.76zM27.12 134.12h.76v.76h-.76zM31.12 134.12h.76v.76h-.76zM35.12 134.12h.76v.76h-.76zM43.12 134.12h.76v.76h-.76zM47.12 134.12h.76v.76h-.76zM51.12 134.12h.76v.76h-.76zM55.12 134.12h.76v.76h-.76zM59.12 134.12h.76v.76h-.76zM63.12 134.12h.76v.76h-.76zM67.12 134.12h.76v.76h-.76zM75.12 134.12h.76v.76h-.76zM79.12 134.12h.76v.76h-.76zM83.12 134.12h.76v.76h-.76zM87.12 134.12h.76v.76h-.76zM1.12 136.12h.76v.76h-.76zM13.12 136.12h.76v.76h-.76zM17.12 136.12h.76v.76h-.76zM21.12 136.12h.76v.76h-.76zM25.12 136.12h.76v.76h-.76zM29.12 136.12h.76v.76h-.76zM33.12 136.12h.76v.76h-.76zM45.12 136.12h.76v.76h-.76zM49.12 136.12h.76v.76h-.76zM53.12 136.12h.76v.76h-.76zM57.12 136.12h.76v.76h-.76zM61.12 136.12h.76v.76h-.76zM65.12 136.12h.76v.76h-.76zM77.12 136.12h.76v.76h-.76zM81.12 136.12h.76v.76h-.76zM85.12 136.12h.76v.76h-.76zM89.12 136.12h.76v.76h-.76zM19.12 138.12h.76v.76h-.76zM23.12 138.12h.76v.76h-.76zM27.12 138.12h.76v.76h-.76zM31.12 138.12h.76v.76h-.76zM51.12 138.12h.76v.76h-.76zM55.12 138.12h.76v.76h-.76zM59.12 138.12h.76v.76h-.76zM63.12 138.12h.76v.76h-.76zM83.12 138.12h.76v.76h-.76zM87.12 138.12h.76v.76h-.76zM21.12 140.12h.76v.76h-.76zM25.12 140.12h.76v.76h-.76zM29.12 140.12h.76v.76h-.76zM53.12 140.12h.76v.76h-.76zM57.12 140.12h.76v.76h-.76zM61.12 140.12h.76v.76h-.76zM85.12 140.12h.76v.76h-.76zM89.12 140.12h.76v.76h-.76zM27.12 142.12h.76v.76h-.76zM31.12 142.12h.76v.76h-.76zM59.12 142.12h.76v.76h-.76zM63.12 142.12h.76v.76h-.76zM29.12 144.12h.76v.76h-.76zM61.12 144.12h.76v.76h-.76zM3.12 150.12h.76v.76h-.76zM31.12 150.12h.76v.76h-.76zM35.12 150.12h.76v.76h-.76zM63.12 150.12h.76v.76h-.76zM67.12 150.12h.76v.76h-.76zM1.12 152.12h.76v.76h-.76zM5.12 152.12h.76v.76h-.76zM29.12 152.12h.76v.76h-.76zM33.12 152.12h.76v.76h-.76zM37.12 152.12h.76v.76h-.76zM61.12 152.12h.76v.76h-.76zM65.12 152.12h.76v.76h-.76zM69.12 152.12h.76v.76h-.76zM3.12 154.12h.76v.76h-.76zM7.12 154.12h.76v.76h-.76zM11.12 154.12h.76v.76h-.76zM27.12 154.12h.76v.76h-.76zM31.12 154.12h.76v.76h-.76zM35.12 154.12h.76v.76h-.76zM39.12 154.12h.76v.76h-.76zM43.12 154.12h.76v.76h-.76zM59.12 154.12h.76v.76h-.76zM63.12 154.12h.76v.76h-.76zM67.12 154.12h.76v.76h-.76zM71.12 154.12h.76v.76h-.76zM75.12 154.12h.76v.76h-.76zM1.12 156.12h.76v.76h-.76zM5.12 156.12h.76v.76h-.76zM13.12 156.12h.76v.76h-.76zM29.12 156.12h.76v.76h-.76zM33.12 156.12h.76v.76h-.76zM37.12 156.12h.76v.76h-.76zM45.12 156.12h.76v.76h-.76zM61.12 156.12h.76v.76h-.76zM65.12 156.12h.76v.76h-.76zM69.12 156.12h.76v.76h-.76zM77.12 156.12h.76v.76h-.76zM3.12 158.12h.76v.76h-.76zM7.12 158.12h.76v.76h-.76zM11.12 158.12h.76v.76h-.76zM15.12 158.12h.76v.76h-.76zM19.12 158.12h.76v.76h-.76zM27.12 158.12h.76v.76h-.76zM31.12 158.12h.76v.76h-.76zM35.12 158.12h.76v.76h-.76zM39.12 158.12h.76v.76h-.76zM43.12 158.12h.76v.76h-.76zM47.12 158.12h.76v.76h-.76zM51.12 158.12h.76v.76h-.76zM59.12 158.12h.76v.76h-.76zM63.12 158.12h.76v.76h-.76zM67.12 158.12h.76v.76h-.76zM71.12 158.12h.76v.76h-.76zM75.12 158.12h.76v.76h-.76zM79.12 158.12h.76v.76h-.76zM83.12 158.12h.76v.76h-.76z"/><path fill="#5c0e36" d="M1.12 0.12h.76v.76h-.76zM5.12 0.12h.76v.76h-.76zM29.12 0.12h.76v.76h-.76zM33.12 0.12h.76v.76h-.76zM37.12 0.12h.76v.76h-.76zM61.12 0.12h.76v.76h-.76zM65.12 0.12h.76v.76h-.76zM69.12 0.12h.76v.76h-.76zM3.12 2.12h.76v.76h-.76zM35.12 2.12h.76v.76h-.76zM67.12 2.12h.76v.76h-.76zM19.12 14.12h.76v.76h-.76zM51.12 14.12h.76v.76h-.76zM83.12 14.12h.76v.76h-.76zM17.12 16.12h.76v.76h-.76zM21.12 16.12h.76v.76h-.76zM49.12 16.12h.76v.76h-.76zM53.12 16.12h.76v.76h-.76zM81.12 16.12h.76v.76h-.76zM85.12 16.12h.76v.76h-.76zM15.12 18.12h.76v.76h-.76zM19.12 18.12h.76v.76h-.76zM23.12 18.12h.76v.76h-.76zM27.12 18.12h.76v.76h-.76zM47.12 18.12h.76v.76h-.76zM51.12 18.12h.76v.76h-.76zM55.12 18.12h.76v.76h-.76zM59.12 18.12h.76v.76h-.76zM79.12 18.12h.76v.76h-.76zM83.12 18.12h.76v.76h-.76zM87.12 18.12h.76v.76h-.76zM17.12 20.12h.76v.76h-.76zM21.12 20.12h.76v.76h-.76zM25.12 20.12h.76v.76h-.76zM49.12 20.12h.76v.76h-.76zM53.12 20.12h.76v.76h-.76zM57.12 20.12h.76v.76h-.76zM81.12 20.12h.76v.76h-.76zM85.12 20.12h.76v.76h-.76zM89.12 20.12h.76v.76h-.76zM15.12 22.12h.76v.76h-.76zM19.12 22.12h.76v.76h-.76zM23.12 22.12h.76v.76h-.76zM27.12 22.12h.76v.76h-.76zM47.12 22.12h.76v.76h-.76zM51.12 22.12h.76v.76h-.76zM55.12 22.12h.76v.76h-.76zM59.12 22.12h.76v.76h-.76zM79.12 22.12h.76v.76h-.76zM83.12 22.12h.76v.76h-.76zM87.12 22.12h.76v.76h-.76zM13.12 24.12h.76v.76h-.76zM17.12 24.12h.76v.76h-.76zM21.12 24.12h.76v.76h-.76zM25.12 24.12h.76v.76h-.76zM45.12 24.12h.76v.76h-.76zM49.12 24.12h.76v.76h-.76zM53.12 24.12h.76v.76h-.76zM57.12 24.12h.76v.76h-.76zM77.12 24.12h.76v.76h-.76zM81.12 24.12h.76v.76h-.76zM85.12 24.12h.76v.76h-.76zM89.12 24.12h.76v.76h-.76zM19.12 26.12h.76v.76h-.76zM23.12 26.12h.76v.76h-.76zM51.12 26.12h.76v.76h-.76zM55.12 26.12h.76v.76h-.76zM83.12 26.12h.76v.76h-.76zM87.12 26.12h.76v.76h-.76zM21.12 28.12h.76v.76h-.76zM53.12 28.12h.76v.76h-.76zM85.12 28.12h.76v.76h-.76zM5.12 40.12h.76v.76h-.76zM37.12 40.12h.76v.76h-.76zM69.12 40.12h.76v.76h-.76zM3.12 42.12h.76v.76h-.76zM7.12 42.12h.76v.76h-.76zM11.12 42.12h.76v.76h-.76zM35.12 42.12h.76v.76h-.76zM39.12 42.12h.76v.76h-.76zM43.12 42.12h.76v.76h-.76zM67.12 42.12h.76v.76h-.76zM71.12 42.12h.76v.76h-.76zM75.12 42.12h.76v.76h-.76zM5.12 44.12h.76v.76h-.76zM9.12 44.12h.76v.76h-.76zM13.12 44.12h.76v.76h-.76zM37.12 44.12h.76v.76h-.76zM41.12 44.12h.76v.76h-.76zM45.12 44.12h.76v.76h-.76zM69.12 44.12h.76v.76h-.76zM73.12 44.12h.76v.76h-.76zM77.12 44.12h.76v.76h-.76zM3.12 46.12h.76v.76h-.76zM7.12 46.12h.76v.76h-.76zM11.12 46.12h.76v.76h-.76zM15.12 46.12h.76v.76h-.76zM35.12 46.12h.76v.76h-.76zM39.12 46.12h.76v.76h-.76zM43.12 46.12h.76v.76h-.76zM47.12 46.12h.76v.76h-.76zM67.12 46.12h.76v.76h-.76zM71.12 46.12h.76v.76h-.76zM75.12 46.12h.76v.76h-.76zM79.12 46.12h.76v.76h-.76zM1.12 48.12h.76v.76h-.76zM5.12 48.12h.76v.76h-.76zM9.12 48.12h.76v.76h-.76zM13.12 48.12h.76v.76h-.76zM33.12 48.12h.76v.76h-.76zM37.12 48.12h.76v.76h-.76zM41.12 48.12h.76v.76h-.76zM45.12 48.12h.76v.76h-.76zM65.12 48.12h.76v.76h-.76zM69.12 48.12h.76v.76h-.76zM73.12 48.12h.76v.76h-.76zM77.12 48.12h.76v.76h-.76zM3.12 50.12h.76v.76h-.76zM7.12 50.12h.76v.76h-.76zM11.12 50.12h.76v.76h-.76zM35.12 50.12h.76v.76h-.76zM39.12 50.12h.76v.76h-.76zM43.12 50.12h.76v.76h-.76zM67.12 50.12h.76v.76h-.76zM71.12 50.12h.76v.76h-.76zM75.12 50.12h.76v.76h-.76zM5.12 52.12h.76v.76h-.76zM9.12 52.12h.76v.76h-.76zM37.12 52.12h.76v.76h-.76zM41.12 52.12h.76v.76h-.76zM69.12 52.12h.76v.76h-.76zM73.12 52.12h.76v.76h-.76zM11.12 54.12h.76v.76h-.76zM43.12 54.12h.76v.76h-.76zM75.12 54.12h.76v.76h-.76zM23.12 66.12h.76v.76h-.76zM27.12 66.12h.76v.76h-.76zM55.12 66.12h.76v.76h-.76zM59.12 66.12h.76v.76h-.76zM87.12 66.12h.76v.76h-.76zM25.12 68.12h.76v.76h-.76zM29.12 68.12h.76v.76h-.76zM57.12 68.12h.76v.76h-.76zM61.12 68.12h.76v.76h-.76zM89.12 68.12h.76v.76h-.76zM3.12 70.12h.76v.76h-.76zM23.12 70.12h.76v.76h-.76zM27.12 70.12h.76v.76h-.76zM31.12 70.12h.76v.76h-.76zM35.12 70.12h.76v.76h-.76zM55.12 70.12h.76v.76h-.76zM59.12 70.12h.76v.76h-.76zM63.12 70.12h.76v.76h-.76zM67.12 70.12h.76v.76h-.76zM87.12 70.12h.76v.76h-.76zM1.12 72.12h.76v.76h-.76zM21.12 72.12h.76v.76h-.76zM25.12 72.12h.76v.76h-.76zM29.12 72.12h.76v.76h-.76zM33.12 72.12h.76v.76h-.76zM53.12 72.12h.76v.76h-.76zM57.12 72.12h.76v.76h-.76zM61.12 72.12h.76v.76h-.76zM65.12 72.12h.76v.76h-.76zM85.12 72.12h.76v.76h-.76zM89.12 72.12h.76v.76h-.76zM19.12 74.12h.76v.76h-.76zM23.12 74.12h.76v.76h-.76zM27.12 74.12h.76v.76h-.76zM31.12 74.12h.76v.76h-.76zM51.12 74.12h.76v.76h-.76zM55.12 74.12h.76v.76h-.76zM59.12 74.12h.76v.76h-.76zM63.12 74.12h.76v.76h-.76zM83.12 74.12h.76v.76h-.76zM87.12 74.12h.76v.76h-.76zM21.12 76.12h.76v.76h-.76zM25.12 76.12h.76v.76h-.76zM29.12 76.12h.76v.76h-.76zM53.12 76.12h.76v.76h-.76zM57.12 76.12h.76v.76h-.76zM61.12 76.12h.76v.76h-.76zM85.12 76.12h.76v.76h-.76zM89.12 76.12h.76v.76h-.76zM27.12 78.12h.76v.76h-.76zM31.12 78.12h.76v.76h-.76zM59.12 78.12h.76v.76h-.76zM63.12 78.12h.76v.76h-.76zM29.12 80.12h.76v.76h-.76zM61.12 80.12h.76v.76h-.76zM11.12 90.12h.76v.76h-.76zM43.12 90.12h.76v.76h-.76zM75.12 90.12h.76v.76h-.76zM13.12 92.12h.76v.76h-.76zM45.12 92.12h.76v.76h-.76zM77.12 92.12h.76v.76h-.76zM11.12 94.12h.76v.76h-.76zM15.12 94.12h.76v.76h-.76zM19.12 94.12h.76v.76h-.76zM43.12 94.12h.76v.76h-.76zM47.12 94.12h.76v.76h-.76zM51.12 94.12h.76v.76h-.76zM75.12 94.12h.76v.76h-.76zM79.12 94.12h.76v.76h-.76zM83.12 94.12h.76v.76h-.76zM9.12 96.12h.76v.76h-.76zM13.12 96.12h.76v.76h-.76zM17.12 96.12h.76v.76h-.76zM21.12 96.12h.76v.76h-.76zM41.12 96.12h.76v.76h-.76zM45.12 96.12h.76v.76h-.76zM49.12 96.12h.76v.76h-.76zM53.12 96.12h.76v.76h-.76zM73.12 96.12h.76v.76h-.76zM77.12 96.12h.76v.76h-.76zM81.12 96.12h.76v.76h-.76zM85.12 96.12h.76v.76h-.76zM7.12 98.12h.76v.76h-.76zM11.12 98.12h.76v.76h-.76zM15.12 98.12h.76v.76h-.76zM19.12 98.12h.76v.76h-.76zM39.12 98.12h.76v.76h-.76zM43.12 98.12h.76v.76h-.76zM47.12 98.12h.76v.76h-.76zM51.12 98.12h.76v.76h-.76zM71.12 98.12h.76v.76h-.76zM75.12 98.12h.76v.76h-.76zM79.12 98.12h.76v.76h-.76zM83.12 98.12h.76v.76h-.76zM9.12 100.12h.76v.76h-.76zM13.12 100.12h.76v.76h-.76zM17.12 100.12h.76v.76h-.76zM41.12 100.12h.76v.76h-.76zM45.12 100.12h.76v.76h-.76zM49.12 100.12h.76v.76h-.76zM73.12 100.12h.76v.76h-.76zM77.12 100.12h.76v.76h-.76zM81.12 100.12h.76v.76h-.76zM11.12 102.12h.76v.76h-.76zM15.12 102.12h.76v.76h-.76zM19.12 102.12h.76v.76h-.76zM43.12 102.12h.76v.76h-.76zM47.12 102.12h.76v.76h-.76zM51.12 102.12h.76v.76h-.76zM75.12 102.12h.76v.76h-.76zM79.12 102.12h.76v.76h-.76zM83.12 102.12h.76v.76h-.76zM13.12 104.12h.76v.76h-.76zM17.12 104.12h.76v.76h-.76zM45.12 104.12h.76v.76h-.76zM49.12 104.12h.76v.76h-.76zM77.12 104.12h.76v.76h-.76zM81.12 104.12h.76v.76h-.76zM3.12 118.12h.76v.76h-.76zM31.12 118.12h.76v.76h-.76zM35.12 118.12h.76v.76h-.76zM63.12 118.12h.76v.76h-.76zM67.12 118.12h.76v.76h-.76zM1.12 120.12h.76v.76h-.76zM5.12 120.12h.76v.76h-.76zM29.12 120.12h.76v.76h-.76zM33.12 120.12h.76v.76h-.76zM37.12 120.12h.76v.76h-.76zM61.12 120.12h.76v.76h-.76zM65.12 120.12h.76v.76h-.76zM69.12 120.12h.76v.76h-.76zM3.12 122.12h.76v.76h-.76zM7.12 122.12h.76v.76h-.76zM27.12 122.12h.76v.76h-.76zM31.12 122.12h.76v.76h-.76zM35.12 122.12h.76v.76h-.76zM39.12 122.12h.76v.76h-.76zM59.12 122.12h.76v.76h-.76zM63.12 122.12h.76v.76h-.76zM67.12 122.12h.76v.76h-.76zM71.12 122.12h.76v.76h-.76zM1.12 124.12h.76v.76h-.76zM5.12 124.12h.76v.76h-.76zM29.12 124.12h.76v.76h-.76zM33.12 124.12h.76v.76h-.76zM37.12 124.12h.76v.76h-.76zM61.12 124.12h.76v.76h-.76zM65.12 124.12h.76v.76h-.76zM69.12 124.12h.76v.76h-.76zM3.12 126.12h.76v.76h-.76zM7.12 126.12h.76v.76h-.76zM27.12 126.12h.76v.76h-.76zM31.12 126.12h.76v.76h-.76zM35.12 126.12h.76v.76h-.76zM39.12 126.12h.76v.76h-.76zM59.12 126.12h.76v.76h-.76zM63.12 126.12h.76v.76h-.76zM67.12 126.12h.76v.76h-.76zM71.12 126.12h.76v.76h-.76zM1.12 128.12h.76v.76h-.76zM5.12 128.12h.76v.76h-.76zM29.12 128.12h.76v.76h-.76zM33.12 128.12h.76v.76h-.76zM37.12 128.12h.76v.76h-.76zM61.12 128.12h.76v.76h-.76zM65.12 128.12h.76v.76h-.76zM69.12 128.12h.76v.76h-.76zM3.12 130.12h.76v.76h-.76zM35.12 130.12h.76v.76h-.76zM67.12 130.12h.76v.76h-.76zM19.12 142.12h.76v.76h-.76zM51.12 142.12h.76v.76h-.76zM83.12 142.12h.76v.76h-.76zM17.12 144.12h.76v.76h-.76zM21.12 144.12h.76v.76h-.76zM49.12 144.12h.76v.76h-.76zM53.12 144.12h.76v.76h-.76zM81.12 144.12h.76v.76h-.76zM85.12 144.12h.76v.76h-.76zM15.12 146.12h.76v.76h-.76zM19.12 146.12h.76v.76h-.76zM23.12 146.12h.76v.76h-.76zM27.12 146.12h.76v.76h-.76zM47.12 146.12h.76v.76h-.76zM51.12 146.12h.76v.76h-.76zM55.12 146.12h.76v.76h-.76zM59.12 146.12h.76v.76h-.76zM79.12 146.12h.76v.76h-.76zM83.12 146.12h.76v.76h-.76zM87.12 146.12h.76v.76h-.76zM17.12 148.12h.76v.76h-.76zM21.12 148.12h.76v.76h-.76zM25.12 148.12h.76v.76h-.76zM49.12 148.12h.76v.76h-.76zM53.12 148.12h.76v.76h-.76zM57.12 148.12h.76v.76h-.76zM81.12 148.12h.76v.76h-.76zM85.12 148.12h.76v.76h-.76zM89.12 148.12h.76v.76h-.76zM15.12 150.12h.76v.76h-.76zM19.12 150.12h.76v.76h-.76zM23.12 150.12h.76v.76h-.76zM27.12 150.12h.76v.76h-.76zM47.12 150.12h.76v.76h-.76zM51.12 150.12h.76v.76h-.76zM55.12 150.12h.76v.76h-.76zM59.12 150.12h.76v.76h-.76zM79.12 150.12h.76v.76h-.76zM83.12 150.12h.76v.76h-.76zM87.12 150.12h.76v.76h-.76zM13.12 152.12h.76v.76h-.76zM17.12 152.12h.76v.76h-.76zM21.12 152.12h.76v.76h-.76zM25.12 152.12h.76v.76h-.76zM45.12 152.12h.76v.76h-.76zM49.12 152.12h.76v.76h-.76zM53.12 152.12h.76v.76h-.76zM57.12 152.12h.76v.76h-.76zM77.12 152.12h.76v.76h-.76zM81.12 152.12h.76v.76h-.76zM85.12 152.12h.76v.76h-.76zM89.12 152.12h.76v.76h-.76zM19.12 154.12h.76v.76h-.76zM23.12 154.12h.76v.76h-.76zM51.12 154.12h.76v.76h-.76zM55.12 154.12h.76v.76h-.76zM83.12 154.12h.76v.76h-.76zM87.12 154.12h.76v.76h-.76zM21.12 156.12h.76v.76h-.76zM53.12 156.12h.76v.76h-.76zM85.12 156.12h.76v.76h-.76z"/><path fill="#5a6cd0" opacity="0.85" d="M5.12 8.12h.76v.76h-.76zM37.12 8.12h.76v.76h-.76zM69.12 8.12h.76v.76h-.76zM3.12 10.12h.76v.76h-.76zM7.12 10.12h.76v.76h-.76zM11.12 10.12h.76v.76h-.76zM35.12 10.12h.76v.76h-.76zM39.12 10.12h.76v.76h-.76zM43.12 10.12h.76v.76h-.76zM67.12 10.12h.76v.76h-.76zM71.12 10.12h.76v.76h-.76zM75.12 10.12h.76v.76h-.76zM5.12 12.12h.76v.76h-.76zM9.12 12.12h.76v.76h-.76zM13.12 12.12h.76v.76h-.76zM37.12 12.12h.76v.76h-.76zM41.12 12.12h.76v.76h-.76zM45.12 12.12h.76v.76h-.76zM69.12 12.12h.76v.76h-.76zM73.12 12.12h.76v.76h-.76zM77.12 12.12h.76v.76h-.76zM3.12 14.12h.76v.76h-.76zM7.12 14.12h.76v.76h-.76zM11.12 14.12h.76v.76h-.76zM15.12 14.12h.76v.76h-.76zM35.12 14.12h.76v.76h-.76zM39.12 14.12h.76v.76h-.76zM43.12 14.12h.76v.76h-.76zM47.12 14.12h.76v.76h-.76zM67.12 14.12h.76v.76h-.76zM71.12 14.12h.76v.76h-.76zM75.12 14.12h.76v.76h-.76zM79.12 14.12h.76v.76h-.76zM1.12 16.12h.76v.76h-.76zM5.12 16.12h.76v.76h-.76zM9.12 16.12h.76v.76h-.76zM13.12 16.12h.76v.76h-.76zM33.12 16.12h.76v.76h-.76zM37.12 16.12h.76v.76h-.76zM41.12 16.12h.76v.76h-.76zM45.12 16.12h.76v.76h-.76zM65.12 16.12h.76v.76h-.76zM69.12 16.12h.76v.76h-.76zM73.12 16.12h.76v.76h-.76zM77.12 16.12h.76v.76h-.76zM3.12 18.12h.76v.76h-.76zM7.12 18.12h.76v.76h-.76zM11.12 18.12h.76v.76h-.76zM35.12 18.12h.76v.76h-.76zM39.12 18.12h.76v.76h-.76zM43.12 18.12h.76v.76h-.76zM67.12 18.12h.76v.76h-.76zM71.12 18.12h.76v.76h-.76zM75.12 18.12h.76v.76h-.76zM5.12 20.12h.76v.76h-.76zM9.12 20.12h.76v.76h-.76zM37.12 20.12h.76v.76h-.76zM41.12 20.12h.76v.76h-.76zM69.12 20.12h.76v.76h-.76zM73.12 20.12h.76v.76h-.76zM11.12 22.12h.76v.76h-.76zM43.12 22.12h.76v.76h-.76zM75.12 22.12h.76v.76h-.76zM23.12 34.12h.76v.76h-.76zM27.12 34.12h.76v.76h-.76zM55.12 34.12h.76v.76h-.76zM59.12 34.12h.76v.76h-.76zM87.12 34.12h.76v.76h-.76zM25.12 36.12h.76v.76h-.76zM29.12 36.12h.76v.76h-.76zM57.12 36.12h.76v.76h-.76zM61.12 36.12h.76v.76h-.76zM89.12 36.12h.76v.76h-.76zM3.12 38.12h.76v.76h-.76zM23.12 38.12h.76v.76h-.76zM27.12 38.12h.76v.76h-.76zM31.12 38.12h.76v.76h-.76zM35.12 38.12h.76v.76h-.76zM55.12 38.12h.76v.76h-.76zM59.12 38.12h.76v.76h-.76zM63.12 38.12h.76v.76h-.76zM67.12 38.12h.76v.76h-.76zM87.12 38.12h.76v.76h-.76zM1.12 40.12h.76v.76h-.76zM21.12 40.12h.76v.76h-.76zM25.12 40.12h.76v.76h-.76zM29.12 40.12h.76v.76h-.76zM33.12 40.12h.76v.76h-.76zM53.12 40.12h.76v.76h-.76zM57.12 40.12h.76v.76h-.76zM61.12 40.12h.76v.76h-.76zM65.12 40.12h.76v.76h-.76zM85.12 40.12h.76v.76h-.76zM89.12 40.12h.76v.76h-.76zM19.12 42.12h.76v.76h-.76zM23.12 42.12h.76v.76h-.76zM27.12 42.12h.76v.76h-.76zM31.12 42.12h.76v.76h-.76zM51.12 42.12h.76v.76h-.76zM55.12 42.12h.76v.76h-.76zM59.12 42.12h.76v.76h-.76zM63.12 42.12h.76v.76h-.76zM83.12 42.12h.76v.76h-.76zM87.12 42.12h.76v.76h-.76zM21.12 44.12h.76v.76h-.76zM25.12 44.12h.76v.76h-.76zM29.12 44.12h.76v.76h-.76zM53.12 44.12h.76v.76h-.76zM57.12 44.12h.76v.76h-.76zM61.12 44.12h.76v.76h-.76zM85.12 44.12h.76v.76h-.76zM89.12 44.12h.76v.76h-.76zM27.12 46.12h.76v.76h-.76zM31.12 46.12h.76v.76h-.76zM59.12 46.12h.76v.76h-.76zM63.12 46.12h.76v.76h-.76zM29.12 48.12h.76v.76h-.76zM61.12 48.12h.76v.76h-.76zM11.12 58.12h.76v.76h-.76zM43.12 58.12h.76v.76h-.76zM75.12 58.12h.76v.76h-.76zM13.12 60.12h.76v.76h-.76zM45.12 60.12h.76v.76h-.76zM77.12 60.12h.76v.76h-.76zM11.12 62.12h.76v.76h-.76zM15.12 62.12h.76v.76h-.76zM19.12 62.12h.76v.76h-.76zM43.12 62.12h.76v.76h-.76zM47.12 62.12h.76v.76h-.76zM51.12 62.12h.76v.76h-.76zM75.12 62.12h.76v.76h-.76zM79.12 62.12h.76v.76h-.76zM83.12 62.12h.76v.76h-.76zM9.12 64.12h.76v.76h-.76zM13.12 64.12h.76v.76h-.76zM17.12 64.12h.76v.76h-.76zM21.12 64.12h.76v.76h-.76zM41.12 64.12h.76v.76h-.76zM45.12 64.12h.76v.76h-.76zM49.12 64.12h.76v.76h-.76zM53.12 64.12h.76v.76h-.76zM73.12 64.12h.76v.76h-.76zM77.12 64.12h.76v.76h-.76zM81.12 64.12h.76v.76h-.76zM85.12 64.12h.76v.76h-.76zM7.12 66.12h.76v.76h-.76zM11.12 66.12h.76v.76h-.76zM15.12 66.12h.76v.76h-.76zM19.12 66.12h.76v.76h-.76zM39.12 66.12h.76v.76h-.76zM43.12 66.12h.76v.76h-.76zM47.12 66.12h.76v.76h-.76zM51.12 66.12h.76v.76h-.76zM71.12 66.12h.76v.76h-.76zM75.12 66.12h.76v.76h-.76zM79.12 66.12h.76v.76h-.76zM83.12 66.12h.76v.76h-.76zM9.12 68.12h.76v.76h-.76zM13.12 68.12h.76v.76h-.76zM17.12 68.12h.76v.76h-.76zM41.12 68.12h.76v.76h-.76zM45.12 68.12h.76v.76h-.76zM49.12 68.12h.76v.76h-.76zM73.12 68.12h.76v.76h-.76zM77.12 68.12h.76v.76h-.76zM81.12 68.12h.76v.76h-.76zM11.12 70.12h.76v.76h-.76zM15.12 70.12h.76v.76h-.76zM19.12 70.12h.76v.76h-.76zM43.12 70.12h.76v.76h-.76zM47.12 70.12h.76v.76h-.76zM51.12 70.12h.76v.76h-.76zM75.12 70.12h.76v.76h-.76zM79.12 70.12h.76v.76h-.76zM83.12 70.12h.76v.76h-.76zM13.12 72.12h.76v.76h-.76zM17.12 72.12h.76v.76h-.76zM45.12 72.12h.76v.76h-.76zM49.12 72.12h.76v.76h-.76zM77.12 72.12h.76v.76h-.76zM81.12 72.12h.76v.76h-.76zM3.12 86.12h.76v.76h-.76zM31.12 86.12h.76v.76h-.76zM35.12 86.12h.76v.76h-.76zM63.12 86.12h.76v.76h-.76zM67.12 86.12h.76v.76h-.76zM1.12 88.12h.76v.76h-.76zM5.12 88.12h.76v.76h-.76zM29.12 88.12h.76v.76h-.76zM33.12 88.12h.76v.76h-.76zM37.12 88.12h.76v.76h-.76zM61.12 88.12h.76v.76h-.76zM65.12 88.12h.76v.76h-.76zM69.12 88.12h.76v.76h-.76zM3.12 90.12h.76v.76h-.76zM7.12 90.12h.76v.76h-.76zM27.12 90.12h.76v.76h-.76zM31.12 90.12h.76v.76h-.76zM35.12 90.12h.76v.76h-.76zM39.12 90.12h.76v.76h-.76zM59.12 90.12h.76v.76h-.76zM63.12 90.12h.76v.76h-.76zM67.12 90.12h.76v.76h-.76zM71.12 90.12h.76v.76h-.76zM1.12 92.12h.76v.76h-.76zM5.12 92.12h.76v.76h-.76zM29.12 92.12h.76v.76h-.76zM33.12 92.12h.76v.76h-.76zM37.12 92.12h.76v.76h-.76zM61.12 92.12h.76v.76h-.76zM65.12 92.12h.76v.76h-.76zM69.12 92.12h.76v.76h-.76zM3.12 94.12h.76v.76h-.76zM7.12 94.12h.76v.76h-.76zM27.12 94.12h.76v.76h-.76zM31.12 94.12h.76v.76h-.76zM35.12 94.12h.76v.76h-.76zM39.12 94.12h.76v.76h-.76zM59.12 94.12h.76v.76h-.76zM63.12 94.12h.76v.76h-.76zM67.12 94.12h.76v.76h-.76zM71.12 94.12h.76v.76h-.76zM1.12 96.12h.76v.76h-.76zM5.12 96.12h.76v.76h-.76zM29.12 96.12h.76v.76h-.76zM33.12 96.12h.76v.76h-.76zM37.12 96.12h.76v.76h-.76zM61.12 96.12h.76v.76h-.76zM65.12 96.12h.76v.76h-.76zM69.12 96.12h.76v.76h-.76zM3.12 98.12h.76v.76h-.76zM35.12 98.12h.76v.76h-.76zM67.12 98.12h.76v.76h-.76zM19.12 110.12h.76v.76h-.76zM51.12 110.12h.76v.76h-.76zM83.12 110.12h.76v.76h-.76zM17.12 112.12h.76v.76h-.76zM21.12 112.12h.76v.76h-.76zM49.12 112.12h.76v.76h-.76zM53.12 112.12h.76v.76h-.76zM81.12 112.12h.76v.76h-.76zM85.12 112.12h.76v.76h-.76zM15.12 114.12h.76v.76h-.76zM19.12 114.12h.76v.76h-.76zM23.12 114.12h.76v.76h-.76zM27.12 114.12h.76v.76h-.76zM47.12 114.12h.76v.76h-.76zM51.12 114.12h.76v.76h-.76zM55.12 114.12h.76v.76h-.76zM59.12 114.12h.76v.76h-.76zM79.12 114.12h.76v.76h-.76zM83.12 114.12h.76v.76h-.76zM87.12 114.12h.76v.76h-.76zM17.12 116.12h.76v.76h-.76zM21.12 116.12h.76v.76h-.76zM25.12 116.12h.76v.76h-.76zM49.12 116.12h.76v.76h-.76zM53.12 116.12h.76v.76h-.76zM57.12 116.12h.76v.76h-.76zM81.12 116.12h.76v.76h-.76zM85.12 116.12h.76v.76h-.76zM89.12 116.12h.76v.76h-.76zM15.12 118.12h.76v.76h-.76zM19.12 118.12h.76v.76h-.76zM23.12 118.12h.76v.76h-.76zM27.12 118.12h.76v.76h-.76zM47.12 118.12h.76v.76h-.76zM51.12 118.12h.76v.76h-.76zM55.12 118.12h.76v.76h-.76zM59.12 118.12h.76v.76h-.76zM79.12 118.12h.76v.76h-.76zM83.12 118.12h.76v.76h-.76zM87.12 118.12h.76v.76h-.76zM13.12 120.12h.76v.76h-.76zM17.12 120.12h.76v.76h-.76zM21.12 120.12h.76v.76h-.76zM25.12 120.12h.76v.76h-.76zM45.12 120.12h.76v.76h-.76zM49.12 120.12h.76v.76h-.76zM53.12 120.12h.76v.76h-.76zM57.12 120.12h.76v.76h-.76zM77.12 120.12h.76v.76h-.76zM81.12 120.12h.76v.76h-.76zM85.12 120.12h.76v.76h-.76zM89.12 120.12h.76v.76h-.76zM19.12 122.12h.76v.76h-.76zM23.12 122.12h.76v.76h-.76zM51.12 122.12h.76v.76h-.76zM55.12 122.12h.76v.76h-.76zM83.12 122.12h.76v.76h-.76zM87.12 122.12h.76v.76h-.76zM21.12 124.12h.76v.76h-.76zM53.12 124.12h.76v.76h-.76zM85.12 124.12h.76v.76h-.76zM5.12 136.12h.76v.76h-.76zM37.12 136.12h.76v.76h-.76zM69.12 136.12h.76v.76h-.76zM3.12 138.12h.76v.76h-.76zM7.12 138.12h.76v.76h-.76zM11.12 138.12h.76v.76h-.76zM35.12 138.12h.76v.76h-.76zM39.12 138.12h.76v.76h-.76zM43.12 138.12h.76v.76h-.76zM67.12 138.12h.76v.76h-.76zM71.12 138.12h.76v.76h-.76zM75.12 138.12h.76v.76h-.76zM5.12 140.12h.76v.76h-.76zM9.12 140.12h.76v.76h-.76zM13.12 140.12h.76v.76h-.76zM37.12 140.12h.76v.76h-.76zM41.12 140.12h.76v.76h-.76zM45.12 140.12h.76v.76h-.76zM69.12 140.12h.76v.76h-.76zM73.12 140.12h.76v.76h-.76zM77.12 140.12h.76v.76h-.76zM3.12 142.12h.76v.76h-.76zM7.12 142.12h.76v.76h-.76zM11.12 142.12h.76v.76h-.76zM15.12 142.12h.76v.76h-.76zM35.12 142.12h.76v.76h-.76zM39.12 142.12h.76v.76h-.76zM43.12 142.12h.76v.76h-.76zM47.12 142.12h.76v.76h-.76zM67.12 142.12h.76v.76h-.76zM71.12 142.12h.76v.76h-.76zM75.12 142.12h.76v.76h-.76zM79.12 142.12h.76v.76h-.76zM1.12 144.12h.76v.76h-.76zM5.12 144.12h.76v.76h-.76zM9.12 144.12h.76v.76h-.76zM13.12 144.12h.76v.76h-.76zM33.12 144.12h.76v.76h-.76zM37.12 144.12h.76v.76h-.76zM41.12 144.12h.76v.76h-.76zM45.12 144.12h.76v.76h-.76zM65.12 144.12h.76v.76h-.76zM69.12 144.12h.76v.76h-.76zM73.12 144.12h.76v.76h-.76zM77.12 144.12h.76v.76h-.76zM3.12 146.12h.76v.76h-.76zM7.12 146.12h.76v.76h-.76zM11.12 146.12h.76v.76h-.76zM35.12 146.12h.76v.76h-.76zM39.12 146.12h.76v.76h-.76zM43.12 146.12h.76v.76h-.76zM67.12 146.12h.76v.76h-.76zM71.12 146.12h.76v.76h-.76zM75.12 146.12h.76v.76h-.76zM5.12 148.12h.76v.76h-.76zM9.12 148.12h.76v.76h-.76zM37.12 148.12h.76v.76h-.76zM41.12 148.12h.76v.76h-.76zM69.12 148.12h.76v.76h-.76zM73.12 148.12h.76v.76h-.76zM11.12 150.12h.76v.76h-.76zM43.12 150.12h.76v.76h-.76zM75.12 150.12h.76v.76h-.76z"/></svg></div>
<span class="t" style="left:535.3px;top:357.05px;font-size:7.89px;color:#2a2a2a;transform:scaleX(0.8108);">Canvas Size</span>
<div style="left:574.5px;top:355.3px;width:110px;height:11.3px;background:#c8c8c8;box-shadow:inset 0 0 0 0.8px #6a6a6a, inset -1px -1px 0 0.3px #3a3a3a;"></div>
<span class="t" style="left:575.8px;top:356.75px;font-size:7.89px;color:#2a2a2a;transform:scaleX(1.0081);">Portrait (tiny)</span>
<svg style="left:676px;top:358.5px" width="6" height="5" viewBox="0 0 6 5"><path d="M0.8 1 L3 3.6 L5.2 1" fill="none" stroke="#222" stroke-width="1.3"/></svg>
<span class="t" style="left:687.5px;top:356.85px;font-size:7.89px;color:#2a2a2a;transform:scaleX(0.8013);">90 × 160</span>
<div style="left:535.3px;top:370px;width:60.5px;height:13.5px;background:#c4c4c4;box-shadow:inset 0 0 0 1px #5a5a5a;"></div>
<span class="t" style="left:537px;top:372.15px;font-size:7.89px;color:#2a2a2a;transform:scaleX(0.8473);">Is Animation</span>
<div style="left:577px;top:372.7px;width:17px;height:8.4px;background:#4a4a4a;border-radius:2px;box-shadow:0 0 0 1px #222;"></div>
<div style="left:577.6px;top:373.2px;width:8px;height:7.4px;background:#dcdcdc;border-radius:2px;box-shadow:0 0 0 0.8px #444;"></div>
<span class="t" style="left:616.2px;top:372.45px;font-size:7.89px;color:#2a2a2a;transform:scaleX(0.8349);">0 Frames</span>
<div style="left:599px;top:383px;width:45px;height:0.9px;background:#cbbfb5;"></div>
<span class="t" style="left:686.6px;top:372.45px;font-size:7.89px;color:#2a2a2a;transform:scaleX(0.7151);">0 FPS</span>
<div style="left:657.7px;top:383px;width:45px;height:0.9px;background:#cbbfb5;"></div>
<svg style="left:646.3px;top:370.7px" width="6" height="11" viewBox="0 0 6 11"><path d="M1 3.5 L3 1.2 L5 3.5" fill="none" stroke="#222" stroke-width="1.3"/><path d="M1 7.5 L3 9.8 L5 7.5" fill="none" stroke="#aaa" stroke-width="1.2"/></svg>
<svg style="left:704.5px;top:370.7px" width="6" height="11" viewBox="0 0 6 11"><path d="M1 3.5 L3 1.2 L5 3.5" fill="none" stroke="#222" stroke-width="1.3"/><path d="M1 7.5 L3 9.8 L5 7.5" fill="none" stroke="#aaa" stroke-width="1.2"/></svg>
<div style="left:535.3px;top:386.8px;width:177.4px;height:11.7px;background:#c4c4c4;box-shadow:inset 0 0 0 1px #5a5a5a;"></div>
<span class="t" style="left:597.2px;top:387.95px;font-size:7.79px;color:#2a2a2a;transform:scaleX(0.7557);">EXPORT AS PNG</span>
<span class="t" style="left:600px;top:385.55px;font-size:7.98px;color:#3a3a3a;transform:scaleX(0.8833);text-shadow:0.8px 0 #f4f4f4,-0.8px 0 #f4f4f4,0 0.8px #f4f4f4,0 -0.8px #f4f4f4,0.6px 0.6px #f4f4f4,-0.6px -0.6px #f4f4f4,0.6px -0.6px #f4f4f4,-0.6px 0.6px #f4f4f4;">Playtest Version 038 (January 2025)</span>
<svg style="left:5px;top:1px" width="70" height="16" viewBox="0 0 70 16" fill="none" stroke="#b8b8b8" stroke-width="1.3"><rect x="1.5" y="1.5" width="12" height="9" rx="1"/><path d="M3 9 L6 4 H12" stroke-width="0.9"/><rect x="1" y="11.8" width="13" height="2.4" rx="1"/><circle cx="33" cy="8" r="2"/><path d="M31 1.8h4l.6 2 1.8-.9 2 3.4-1.6 1.2v1l1.6 1.2-2 3.4-1.8-.9-.6 2h-4l-.6-2-1.8.9-2-3.4 1.6-1.2v-1l-1.6-1.2 2-3.4 1.8.9z"/><path d="M51.5 1.5 H63.5 V11 L61 14.5 H51.5 Z"/><circle cx="57.5" cy="7.5" r="1.6"/><path d="M57.5 4.5v1.2M57.5 9.3v1.2M54.5 7.5h1.2M59.3 7.5h1.2" stroke-width="0.9"/></svg>
<svg style="left:298px;top:0px" width="130" height="18" viewBox="0 0 130 18"><path d="M2.800 13.300 V7 A5 5.800 0 0 1 7.800 1.200 H11 A4.800 5.800 0 0 1 15.800 7 V13.300 Z" fill="#2a78d6" stroke="#14224e" stroke-width="0.800"/><path d="M3.400 12.700 V7 A3 5 0 0 1 9.400 7 V12.700Z" fill="#50b8f6" stroke="#14224e" stroke-width="0.600"/><rect x="2.400" y="8.600" width="4.600" height="2.300" fill="#ec2a4c"/><rect x="2.400" y="10.900" width="2.400" height="2.600" fill="#b81c3c"/><rect x="6.800" y="13.600" width="2.800" height="4.200" fill="#e8284a"/><rect x="10.500" y="13.600" width="1.600" height="2.600" fill="#14224e"/><path d="M31.60 0.80 L37.30 3.65 L31.60 6.50 L25.90 3.65Z" fill="#fbd838" stroke="#3a2a10" stroke-width="0.6" stroke-linejoin="round"/><path d="M25.90 3.65 L31.60 6.50 L31.60 10.00 L25.90 7.15Z" fill="#f08a28" stroke="#3a2a10" stroke-width="0.6" stroke-linejoin="round"/><path d="M37.30 3.65 L31.60 6.50 L31.60 10.00 L37.30 7.15Z" fill="#f8c030" stroke="#3a2a10" stroke-width="0.6" stroke-linejoin="round"/><rect x="38.600" y="1" width="6.200" height="6" fill="#eaf4ea"/><path d="M39.600 4 L41.300 5.900 L44 1.900" stroke="#2a9a4a" stroke-width="1.300" fill="none"/><path d="M29.500 11.400 H43 V14.600 H29.500Z M28 16.200 H44.500" fill="none" stroke="#2c4c84" stroke-width="1.100"/><path d="M62.70 0.60 L67.50 3.00 L62.70 5.40 L57.90 3.00Z" fill="#fbd838" stroke="#3a2a10" stroke-width="0.6" stroke-linejoin="round"/><path d="M57.90 3.00 L62.70 5.40 L62.70 9.20 L57.90 6.80Z" fill="#f08a28" stroke="#3a2a10" stroke-width="0.6" stroke-linejoin="round"/><path d="M67.50 3.00 L62.70 5.40 L62.70 9.20 L67.50 6.80Z" fill="#f8c030" stroke="#3a2a10" stroke-width="0.6" stroke-linejoin="round"/><path d="M57.50 8.80 L61.90 11.00 L57.50 13.20 L53.10 11.00Z" fill="#f4587a" stroke="#3a0a18" stroke-width="0.6" stroke-linejoin="round"/><path d="M53.10 11.00 L57.50 13.20 L57.50 17.80 L53.10 15.60Z" fill="#e8204a" stroke="#3a0a18" stroke-width="0.6" stroke-linejoin="round"/><path d="M61.90 11.00 L57.50 13.20 L57.50 17.80 L61.90 15.60Z" fill="#b8183c" stroke="#3a0a18" stroke-width="0.6" stroke-linejoin="round"/><path d="M66.80 8.80 L71.20 11.00 L66.80 13.20 L62.40 11.00Z" fill="#58c888" stroke="#0a2a18" stroke-width="0.6" stroke-linejoin="round"/><path d="M62.40 11.00 L66.80 13.20 L66.80 17.80 L62.40 15.60Z" fill="#2a9a5a" stroke="#0a2a18" stroke-width="0.6" stroke-linejoin="round"/><path d="M71.20 11.00 L66.80 13.20 L66.80 17.80 L71.20 15.60Z" fill="#1f7a48" stroke="#0a2a18" stroke-width="0.6" stroke-linejoin="round"/><rect x="75.800" y="0" width="20.600" height="1.600" fill="#f21a5a"/><rect x="80.900" y="2.200" width="4.300" height="4.900" fill="#e8204a"/><rect x="85.600" y="2.200" width="4.600" height="4.900" fill="#2f7fe0"/><rect x="90.800" y="2.200" width="4.700" height="4.900" fill="#2f9a6a"/><rect x="80.900" y="7.900" width="4.300" height="4.300" fill="#e8204a"/><rect x="85.600" y="7.900" width="4.600" height="4.300" fill="#f08428"/><path d="M92 9.400 L97.400 11 L95.800 16.500 L90.300 14.900Z" fill="#f8d030" stroke="#6a5010" stroke-width="0.500"/><rect x="109.500" y="0.500" width="12.200" height="9" rx="3" fill="#f4f4f4"/><path d="M113.600 9 L115.600 12 L117.600 9Z" fill="#f4f4f4"/><path d="M115.60 1.60 L119.40 3.50 L115.60 5.40 L111.80 3.50Z" fill="#fbd838" stroke="#3a2a10" stroke-width="0.6" stroke-linejoin="round"/><path d="M111.80 3.50 L115.60 5.40 L115.60 8.60 L111.80 6.70Z" fill="#f08a28" stroke="#3a2a10" stroke-width="0.6" stroke-linejoin="round"/><path d="M119.40 3.50 L115.60 5.40 L115.60 8.60 L119.40 6.70Z" fill="#f8c030" stroke="#3a2a10" stroke-width="0.6" stroke-linejoin="round"/><circle cx="108.600" cy="10.800" r="1.700" fill="#0a0a0a"/><path d="M105.800 16.500 V14.200 Q108.600 11.800 111.400 14.200 V16.500Z" fill="#0a0a0a"/><circle cx="121.800" cy="10.800" r="1.700" fill="#0a0a0a"/><path d="M119 16.500 V14.200 Q121.800 11.800 124.600 14.200 V16.500Z" fill="#0a0a0a"/></svg>
<div style="left:537px;top:5.5px;width:4.2px;height:6px;background:#ececec;"></div>
<span class="t" style="left:548.2px;top:0.81px;font-size:12.82px;color:#ececec;font-weight:700;">»</span>
<span class="t" style="left:558px;top:4.45px;font-size:7.89px;color:#d0d0d0;-webkit-text-stroke:0.12px currentColor;transform:scaleX(0.8052);">Cubist Bossa</span>
<span class="t" style="left:674.5px;top:1.15px;font-size:7.89px;color:#dcdcdc;transform:scaleX(0.7940);">THU 2025.1.23</span>
<span class="t" style="left:689px;top:8.85px;font-size:7.89px;color:#dcdcdc;transform:scaleX(0.8237);">08:48 PM</span>
</div></body></html>
